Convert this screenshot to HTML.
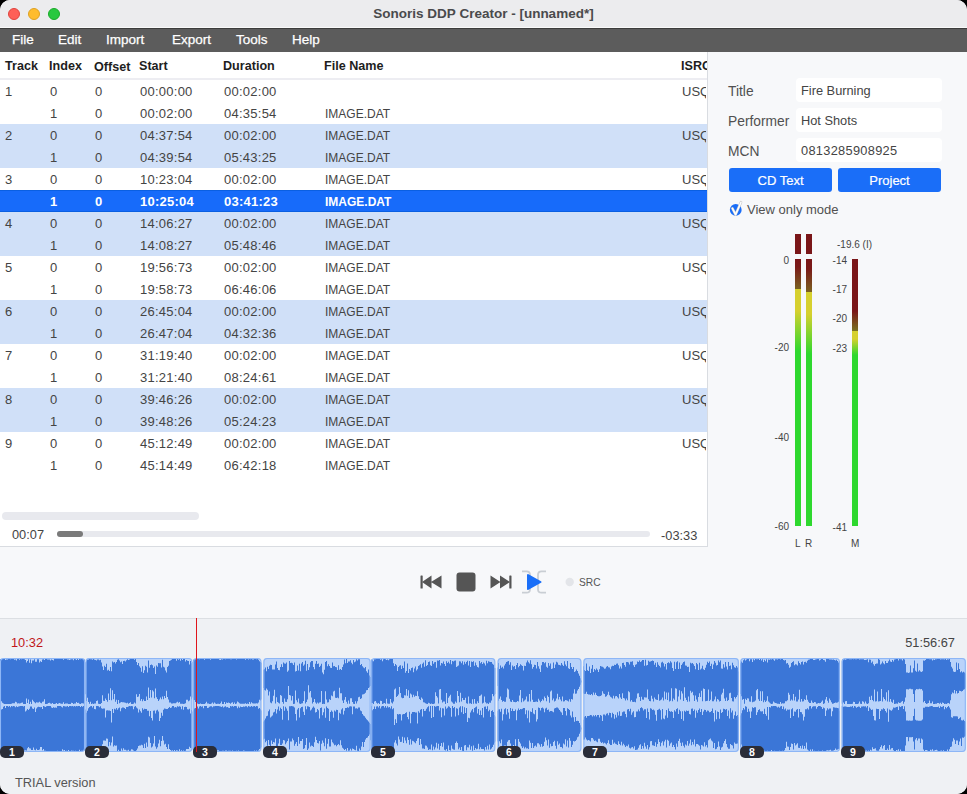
<!DOCTYPE html>
<html><head><meta charset="utf-8">
<style>
*{box-sizing:border-box;margin:0;padding:0}
html,body{width:967px;height:794px;overflow:hidden;background:#000}
body{font-family:"Liberation Sans",sans-serif;position:relative}
.win{position:absolute;left:0;top:0;width:967px;height:794px;border-radius:10px;overflow:hidden;background:#f7f8fa}
.abs{position:absolute}
.titlebar{left:0;top:0;width:967px;height:28px;background:#ececee;border-bottom:1px solid #fafafa}
.tl{position:absolute;width:12px;height:12px;border-radius:50%;top:8px}
.title{position:absolute;left:0;width:967px;top:6px;text-align:center;font-weight:bold;font-size:13.5px;color:#4a4a4c}
.menubar{left:0;top:28px;width:967px;height:24px;background:#5c5c5c;border-top:1px solid #3c3c3c}
.menubar span{position:absolute;top:3px;color:#fff;font-size:13.5px;-webkit-text-stroke:0.25px #fff}
.table{left:0;top:52px;width:708px;height:495px;background:#fff;border-right:1px solid #d9dce1;border-bottom:1px solid #d9dce1;overflow:hidden}
.hdr{position:absolute;top:0;left:0;width:707px;height:28px;border-bottom:2px solid #ededf2}
.hdr span{position:absolute;top:7.3px;font-weight:bold;font-size:12.6px;color:#1e1e1e}
.row{position:absolute;left:0;width:707px;height:22px;font-size:13px;color:#444}
.row span{position:absolute;top:4px;white-space:nowrap}
.row.b{background:#d0e0f8}
.row.sel{background:#176bfa;color:#fff;font-weight:bold;border-top:1px solid #0a5fe2;border-bottom:1px solid #0a5fe2}
.row.sel span{top:3px}
.row.sel .c5{top:4px!important}
.c0{left:5px}.c1{left:50px}.c2{left:95px}.c3{left:140px;letter-spacing:0.25px}.c4{left:224px;letter-spacing:0.25px}.c5{left:325px;font-size:12px;top:5px!important}.c6{left:682px;width:24px;overflow:hidden}

.lbl{position:absolute;font-size:13.8px;color:#505050}
.fld{position:absolute;left:796px;width:146px;height:24px;background:#fff;border-radius:4px;font-size:12.8px;color:#444;padding:4.5px 0 0 5px;white-space:nowrap}
.btn{position:absolute;top:168px;height:24px;background:#1a6ef8;border-radius:3px;color:#fff;font-size:13px;text-align:center;padding-top:5px;-webkit-text-stroke:0.2px #fff}
.ml{position:absolute;font-size:10px;color:#444;white-space:nowrap}
.bar{position:absolute;width:6px}
.tab{position:absolute;top:746px;width:24px;height:12px;border-radius:5px;background:#2a2d38;color:#fff;font-size:10.5px;font-weight:bold;text-align:center;line-height:12px}
</style></head><body>
<div class="win">
 <div class="abs titlebar">
  <div class="tl" style="left:8px;background:#fe5f57;border:0.5px solid #e0443e"></div>
  <div class="tl" style="left:28px;background:#febc2e;border:0.5px solid #dea123"></div>
  <div class="tl" style="left:48px;background:#28c840;border:0.5px solid #1aab29"></div>
  <div class="title">Sonoris DDP Creator - [unnamed*]</div>
 </div>
 <div class="abs menubar">
  <span style="left:12px">File</span><span style="left:58px">Edit</span><span style="left:106px">Import</span><span style="left:172px">Export</span><span style="left:236px">Tools</span><span style="left:292px">Help</span>
 </div>
 <div class="abs table">
  <div class="hdr"><span style="left:5px">Track</span><span style="left:49px">Index</span><span style="left:94px;top:8.3px">Offset</span><span style="left:139px">Start</span><span style="left:223px">Duration</span><span style="left:324px">File Name</span><span style="left:681px">ISRC</span></div>
  <div class="row" style="top:28px"><span class="c0">1</span><span class="c1">0</span><span class="c2">0</span><span class="c3">00:00:00</span><span class="c4">00:02:00</span><span class="c6">USQ</span></div>
<div class="row" style="top:50px"><span class="c1">1</span><span class="c2">0</span><span class="c3">00:02:00</span><span class="c4">04:35:54</span><span class="c5">IMAGE.DAT</span></div>
<div class="row b" style="top:72px"><span class="c0">2</span><span class="c1">0</span><span class="c2">0</span><span class="c3">04:37:54</span><span class="c4">00:02:00</span><span class="c5">IMAGE.DAT</span><span class="c6">USQ</span></div>
<div class="row b" style="top:94px"><span class="c1">1</span><span class="c2">0</span><span class="c3">04:39:54</span><span class="c4">05:43:25</span><span class="c5">IMAGE.DAT</span></div>
<div class="row" style="top:116px"><span class="c0">3</span><span class="c1">0</span><span class="c2">0</span><span class="c3">10:23:04</span><span class="c4">00:02:00</span><span class="c5">IMAGE.DAT</span><span class="c6">USQ</span></div>
<div class="row sel" style="top:138px"><span class="c1">1</span><span class="c2">0</span><span class="c3">10:25:04</span><span class="c4">03:41:23</span><span class="c5">IMAGE.DAT</span></div>
<div class="row b" style="top:160px"><span class="c0">4</span><span class="c1">0</span><span class="c2">0</span><span class="c3">14:06:27</span><span class="c4">00:02:00</span><span class="c5">IMAGE.DAT</span><span class="c6">USQ</span></div>
<div class="row b" style="top:182px"><span class="c1">1</span><span class="c2">0</span><span class="c3">14:08:27</span><span class="c4">05:48:46</span><span class="c5">IMAGE.DAT</span></div>
<div class="row" style="top:204px"><span class="c0">5</span><span class="c1">0</span><span class="c2">0</span><span class="c3">19:56:73</span><span class="c4">00:02:00</span><span class="c5">IMAGE.DAT</span><span class="c6">USQ</span></div>
<div class="row" style="top:226px"><span class="c1">1</span><span class="c2">0</span><span class="c3">19:58:73</span><span class="c4">06:46:06</span><span class="c5">IMAGE.DAT</span></div>
<div class="row b" style="top:248px"><span class="c0">6</span><span class="c1">0</span><span class="c2">0</span><span class="c3">26:45:04</span><span class="c4">00:02:00</span><span class="c5">IMAGE.DAT</span><span class="c6">USQ</span></div>
<div class="row b" style="top:270px"><span class="c1">1</span><span class="c2">0</span><span class="c3">26:47:04</span><span class="c4">04:32:36</span><span class="c5">IMAGE.DAT</span></div>
<div class="row" style="top:292px"><span class="c0">7</span><span class="c1">0</span><span class="c2">0</span><span class="c3">31:19:40</span><span class="c4">00:02:00</span><span class="c5">IMAGE.DAT</span><span class="c6">USQ</span></div>
<div class="row" style="top:314px"><span class="c1">1</span><span class="c2">0</span><span class="c3">31:21:40</span><span class="c4">08:24:61</span><span class="c5">IMAGE.DAT</span></div>
<div class="row b" style="top:336px"><span class="c0">8</span><span class="c1">0</span><span class="c2">0</span><span class="c3">39:46:26</span><span class="c4">00:02:00</span><span class="c5">IMAGE.DAT</span><span class="c6">USQ</span></div>
<div class="row b" style="top:358px"><span class="c1">1</span><span class="c2">0</span><span class="c3">39:48:26</span><span class="c4">05:24:23</span><span class="c5">IMAGE.DAT</span></div>
<div class="row" style="top:380px"><span class="c0">9</span><span class="c1">0</span><span class="c2">0</span><span class="c3">45:12:49</span><span class="c4">00:02:00</span><span class="c5">IMAGE.DAT</span><span class="c6">USQ</span></div>
<div class="row" style="top:402px"><span class="c1">1</span><span class="c2">0</span><span class="c3">45:14:49</span><span class="c4">06:42:18</span><span class="c5">IMAGE.DAT</span></div>

  <div class="abs" style="left:2px;top:460px;width:197px;height:8px;border-radius:4px;background:#e8e9ee"></div>
  <div class="abs" style="left:12px;top:475px;font-size:12.8px;color:#444">00:07</div>
  <div class="abs" style="left:57px;top:479px;width:593px;height:6px;border-radius:3px;background:#e8e9ee"></div>
  <div class="abs" style="left:57px;top:479px;width:26px;height:6px;border-radius:3px;background:#7a7a7a"></div>
  <div class="abs" style="left:661px;top:476px;font-size:12.8px;color:#444">-03:33</div>
 </div>
 <div class="lbl" style="left:728px;top:84px">Title</div>
 <div class="lbl" style="left:728px;top:114px">Performer</div>
 <div class="lbl" style="left:728px;top:144px">MCN</div>
 <div class="fld" style="top:78px">Fire Burning</div>
 <div class="fld" style="top:108px">Hot Shots</div>
 <div class="fld" style="top:138px;letter-spacing:0.3px">0813285908925</div>
 <div class="btn" style="left:729px;width:103px">CD Text</div>
 <div class="btn" style="left:838px;width:103px">Project</div>
 <svg class="abs" style="left:728px;top:196px" width="18" height="22" viewBox="728 196 18 22"><circle cx="735.75" cy="209.9" r="5.9" fill="#1a6ef8"/><path d="M732.4 208.4 L735.6 214.6 L741 202.2" stroke="#c8c8c8" stroke-width="2.6" fill="none" stroke-linejoin="round" stroke-linecap="round"/><path d="M732.4 208.4 L735.6 214.6 L741 202.2" stroke="#fff" stroke-width="1.5" fill="none" stroke-linejoin="round" stroke-linecap="round"/></svg>
 <div class="lbl" style="left:747px;top:202px;font-size:13px">View only mode</div>

 <div class="bar" style="left:795px;top:234px;height:20px;background:#7a1618"></div>
 <div class="bar" style="left:806px;top:234px;height:20px;background:#7a1618"></div>
 <div class="bar" style="left:795px;top:259px;height:267px;background:linear-gradient(to bottom,#7a1618 0px,#7a1a18 8px,#7a6020 29.5px,#d6d02e 30px,#d6d02e 52px,#2ed82e 92px,#2ed82e 267px)"></div>
 <div class="bar" style="left:806px;top:259px;height:267px;background:linear-gradient(to bottom,#7a1618 0px,#7a1a18 10px,#7a6020 32.5px,#d6d02e 33px,#d6d02e 55px,#2ed82e 95px,#2ed82e 267px)"></div>
 <div class="bar" style="left:852px;top:259px;height:267px;background:linear-gradient(to bottom,#7a1618 0px,#7a1618 52px,#7a7020 71.5px,#d6d02e 72px,#d6d02e 80px,#2ed82e 96px,#2ed82e 267px)"></div>
 <div class="ml" style="right:178px;top:255px">0</div>
 <div class="ml" style="right:178px;top:342px">-20</div>
 <div class="ml" style="right:178px;top:432px">-40</div>
 <div class="ml" style="right:178px;top:521px">-60</div>
 <div class="ml" style="right:120px;top:255px">-14</div>
 <div class="ml" style="right:120px;top:284px">-17</div>
 <div class="ml" style="right:120px;top:313px">-20</div>
 <div class="ml" style="right:120px;top:343px">-23</div>
 <div class="ml" style="right:120px;top:522px">-41</div>
 <div class="ml" style="left:837px;top:239px">-19.6 (I)</div>
 <div class="ml" style="left:795px;top:538px">L</div>
 <div class="ml" style="left:805px;top:538px">R</div>
 <div class="ml" style="left:851px;top:538px">M</div>

 <svg class="abs" style="left:415px;top:566px" width="190" height="32" viewBox="415 566 190 32">
  <rect x="420.5" y="575.5" width="2.2" height="13" rx="0.6" fill="#555"/>
  <path d="M422 582 L431.5 575.5 L431.5 588.5 Z M431 582 L441.5 575.5 L441.5 588.5 Z" fill="#555"/>
  <rect x="456.5" y="572.5" width="19" height="19" rx="3" fill="#555"/>
  <path d="M490.5 575.5 L500.5 582 L490.5 588.5 Z M500 575.5 L510 582 L500 588.5 Z" fill="#555"/>
  <rect x="509.3" y="575.5" width="2.2" height="13" rx="0.6" fill="#555"/>
  <path d="M522 571.3 H526.5 Q530 571.3 530 574.8 V589.2 Q530 592.7 526.5 592.7 H522 M546 571.3 H541.5 Q538 571.3 538 574.8 V589.2 Q538 592.7 541.5 592.7 H546" stroke="#c9ced4" stroke-width="1.8" fill="none"/>
  <path d="M528 575 L540.5 582 L528 589 Z" fill="#1a6ff8" stroke="#1a6ff8" stroke-width="2" stroke-linejoin="round"/>
  <circle cx="569.7" cy="582" r="4.2" fill="#e3e5e9"/>
 </svg>
 <div class="abs" style="left:579px;top:577px;font-size:10.2px;color:#555">SRC</div>
 <div class="abs" style="left:0;top:618px;width:967px;height:176px;background:#eff1f4;border-top:1px solid #dcdfe3"></div>
 <!--WAVE--><svg class="abs" style="left:0;top:0" width="967" height="794" viewBox="0 0 967 794">
<defs>
<clipPath id="cp0"><rect x="0" y="658" width="85" height="94" rx="3"/></clipPath>
<clipPath id="cp1"><rect x="85.6" y="658" width="106.7" height="94" rx="3"/></clipPath>
<clipPath id="cp2"><rect x="193.2" y="658" width="68.2" height="94" rx="3"/></clipPath>
<clipPath id="cp3"><rect x="263.4" y="658" width="107.2" height="94" rx="3"/></clipPath>
<clipPath id="cp4"><rect x="371.3" y="658" width="124" height="94" rx="3"/></clipPath>
<clipPath id="cp5"><rect x="497.6" y="658" width="83.8" height="94" rx="3"/></clipPath>
<clipPath id="cp6"><rect x="583.4" y="658" width="155.4" height="94" rx="3"/></clipPath>
<clipPath id="cp7"><rect x="740.3" y="658" width="99.5" height="94" rx="3"/></clipPath>
<clipPath id="cp8"><rect x="841.8" y="658" width="124" height="94" rx="3"/></clipPath>
</defs>
<rect x="0" y="658" width="85" height="94" rx="3" fill="#b9d3fa"/>
<path clip-path="url(#cp0)" fill="#3b76d7" d="M0 659.0 L1 659.0 L1 659.7 L2 659.7 L2 659.1 L3 659.1 L3 659.0 L4 659.0 L4 659.1 L5 659.1 L5 659.9 L6 659.9 L6 659.4 L7 659.4 L7 659.5 L8 659.5 L8 659.1 L9 659.1 L9 659.0 L10 659.0 L10 659.2 L11 659.2 L11 659.1 L12 659.1 L12 659.1 L13 659.1 L13 659.0 L14 659.0 L14 659.8 L15 659.8 L15 659.5 L16 659.5 L16 660.4 L17 660.4 L17 659.0 L18 659.0 L18 659.0 L19 659.0 L19 659.7 L20 659.7 L20 659.0 L21 659.0 L21 659.2 L22 659.2 L22 659.0 L23 659.0 L23 659.1 L24 659.1 L24 659.2 L25 659.2 L25 660.1 L26 660.1 L26 662.5 L27 662.5 L27 661.0 L28 661.0 L28 659.3 L29 659.3 L29 662.8 L30 662.8 L30 659.4 L31 659.4 L31 663.2 L32 663.2 L32 660.6 L33 660.6 L33 660.4 L34 660.4 L34 659.2 L35 659.2 L35 661.7 L36 661.7 L36 661.7 L37 661.7 L37 659.2 L38 659.2 L38 659.3 L39 659.3 L39 662.6 L40 662.6 L40 661.3 L41 661.3 L41 661.9 L42 661.9 L42 659.4 L43 659.4 L43 659.2 L44 659.2 L44 659.9 L45 659.9 L45 659.0 L46 659.0 L46 659.0 L47 659.0 L47 659.4 L48 659.4 L48 659.5 L49 659.5 L49 659.6 L50 659.6 L50 660.5 L51 660.5 L51 659.5 L52 659.5 L52 660.1 L53 660.1 L53 660.5 L54 660.5 L54 659.1 L55 659.1 L55 659.1 L56 659.1 L56 659.1 L57 659.1 L57 659.1 L58 659.1 L58 659.0 L59 659.0 L59 659.0 L60 659.0 L60 659.1 L61 659.1 L61 659.0 L62 659.0 L62 659.1 L63 659.1 L63 659.7 L64 659.7 L64 659.0 L65 659.0 L65 659.0 L66 659.0 L66 659.0 L67 659.0 L67 659.4 L68 659.4 L68 659.5 L69 659.5 L69 660.1 L70 660.1 L70 659.4 L71 659.4 L71 659.2 L72 659.2 L72 659.2 L73 659.2 L73 660.3 L74 660.3 L74 659.0 L75 659.0 L75 659.3 L76 659.3 L76 660.1 L77 660.1 L77 659.1 L78 659.1 L78 660.1 L79 660.1 L79 659.0 L80 659.0 L80 659.2 L81 659.2 L81 659.0 L82 659.0 L82 659.0 L83 659.0 L83 659.1 L84 659.1 L84 659.4 L85 659.4 L85 660.4 L86 660.4 L86 704.0 L85 704.0 L85 702.4 L84 702.4 L84 703.5 L83 703.5 L83 703.3 L82 703.3 L82 703.2 L81 703.2 L81 703.9 L80 703.9 L80 703.8 L79 703.8 L79 702.8 L78 702.8 L78 703.1 L77 703.1 L77 702.0 L76 702.0 L76 703.4 L75 703.4 L75 703.5 L74 703.5 L74 703.9 L73 703.9 L73 702.9 L72 702.9 L72 702.7 L71 702.7 L71 704.0 L70 704.0 L70 704.0 L69 704.0 L69 703.9 L68 703.9 L68 703.6 L67 703.6 L67 703.4 L66 703.4 L66 703.6 L65 703.6 L65 703.9 L64 703.9 L64 702.3 L63 702.3 L63 703.7 L62 703.7 L62 703.8 L61 703.8 L61 703.6 L60 703.6 L60 703.1 L59 703.1 L59 703.5 L58 703.5 L58 704.0 L57 704.0 L57 703.1 L56 703.1 L56 703.7 L55 703.7 L55 704.0 L54 704.0 L54 704.0 L53 704.0 L53 702.9 L52 702.9 L52 703.7 L51 703.7 L51 703.6 L50 703.6 L50 702.7 L49 702.7 L49 703.1 L48 703.1 L48 703.7 L47 703.7 L47 703.9 L46 703.9 L46 703.9 L45 703.9 L45 699.3 L44 699.3 L44 701.5 L43 701.5 L43 701.7 L42 701.7 L42 703.3 L41 703.3 L41 702.8 L40 702.8 L40 701.8 L39 701.8 L39 702.4 L38 702.4 L38 702.4 L37 702.4 L37 702.2 L36 702.2 L36 703.3 L35 703.3 L35 702.2 L34 702.2 L34 701.2 L33 701.2 L33 699.8 L32 699.8 L32 704.0 L31 704.0 L31 701.8 L30 701.8 L30 704.0 L29 704.0 L29 699.6 L28 699.6 L28 703.0 L27 703.0 L27 698.4 L26 698.4 L26 704.0 L25 704.0 L25 704.0 L24 704.0 L24 704.0 L23 704.0 L23 702.5 L22 702.5 L22 702.8 L21 702.8 L21 703.3 L20 703.3 L20 703.5 L19 703.5 L19 703.3 L18 703.3 L18 703.6 L17 703.6 L17 702.3 L16 702.3 L16 701.8 L15 701.8 L15 703.3 L14 703.3 L14 703.3 L13 703.3 L13 703.2 L12 703.2 L12 703.7 L11 703.7 L11 704.0 L10 704.0 L10 704.0 L9 704.0 L9 704.0 L8 704.0 L8 704.0 L7 704.0 L7 703.9 L6 703.9 L6 704.0 L5 704.0 L5 703.9 L4 703.9 L4 703.6 L3 703.6 L3 702.7 L2 702.7 L2 701.3 L1 701.3 L1 699.9 L0 699.9ZM0 711.2 L1 711.2 L1 709.4 L2 709.4 L2 708.9 L3 708.9 L3 706.8 L4 706.8 L4 706.0 L5 706.0 L5 708.0 L6 708.0 L6 706.0 L7 706.0 L7 706.0 L8 706.0 L8 706.7 L9 706.7 L9 706.0 L10 706.0 L10 707.3 L11 707.3 L11 706.1 L12 706.1 L12 706.4 L13 706.4 L13 706.0 L14 706.0 L14 706.3 L15 706.3 L15 707.2 L16 707.2 L16 706.3 L17 706.3 L17 707.0 L18 707.0 L18 706.5 L19 706.5 L19 706.2 L20 706.2 L20 706.1 L21 706.1 L21 706.1 L22 706.1 L22 706.1 L23 706.1 L23 706.4 L24 706.4 L24 706.1 L25 706.1 L25 711.6 L26 711.6 L26 710.4 L27 710.4 L27 709.0 L28 709.0 L28 709.9 L29 709.9 L29 708.7 L30 708.7 L30 706.4 L31 706.4 L31 706.6 L32 706.6 L32 708.4 L33 708.4 L33 709.1 L34 709.1 L34 707.6 L35 707.6 L35 712.0 L36 712.0 L36 708.4 L37 708.4 L37 707.3 L38 707.3 L38 706.7 L39 706.7 L39 706.9 L40 706.9 L40 707.2 L41 707.2 L41 707.0 L42 707.0 L42 709.0 L43 709.0 L43 706.0 L44 706.0 L44 706.5 L45 706.5 L45 706.9 L46 706.9 L46 706.2 L47 706.2 L47 706.0 L48 706.0 L48 706.0 L49 706.0 L49 706.0 L50 706.0 L50 706.1 L51 706.1 L51 707.4 L52 707.4 L52 708.0 L53 708.0 L53 707.3 L54 707.3 L54 707.8 L55 707.8 L55 707.5 L56 707.5 L56 707.8 L57 707.8 L57 706.0 L58 706.0 L58 706.0 L59 706.0 L59 706.1 L60 706.1 L60 706.1 L61 706.1 L61 706.7 L62 706.7 L62 707.6 L63 707.6 L63 706.0 L64 706.0 L64 706.3 L65 706.3 L65 706.4 L66 706.4 L66 706.4 L67 706.4 L67 706.1 L68 706.1 L68 707.1 L69 707.1 L69 706.0 L70 706.0 L70 706.1 L71 706.1 L71 706.2 L72 706.2 L72 706.1 L73 706.1 L73 706.6 L74 706.6 L74 706.0 L75 706.0 L75 706.6 L76 706.6 L76 706.0 L77 706.0 L77 706.3 L78 706.3 L78 706.1 L79 706.1 L79 706.1 L80 706.1 L80 707.1 L81 707.1 L81 706.1 L82 706.1 L82 706.7 L83 706.7 L83 706.0 L84 706.0 L84 706.4 L85 706.4 L85 706.0 L86 706.0 L86 751.0 L85 751.0 L85 750.6 L84 750.6 L84 750.7 L83 750.7 L83 751.0 L82 751.0 L82 750.7 L81 750.7 L81 750.9 L80 750.9 L80 749.8 L79 749.8 L79 751.0 L78 751.0 L78 750.9 L77 750.9 L77 750.9 L76 750.9 L76 750.7 L75 750.7 L75 750.9 L74 750.9 L74 750.8 L73 750.8 L73 750.8 L72 750.8 L72 750.6 L71 750.6 L71 751.0 L70 751.0 L70 751.0 L69 751.0 L69 749.9 L68 749.9 L68 751.0 L67 751.0 L67 750.8 L66 750.8 L66 750.9 L65 750.9 L65 750.1 L64 750.1 L64 750.5 L63 750.5 L63 749.2 L62 749.2 L62 751.0 L61 751.0 L61 750.9 L60 750.9 L60 751.0 L59 751.0 L59 750.9 L58 750.9 L58 750.7 L57 750.7 L57 750.9 L56 750.9 L56 750.9 L55 750.9 L55 750.9 L54 750.9 L54 751.0 L53 751.0 L53 751.0 L52 751.0 L52 750.9 L51 750.9 L51 751.0 L50 751.0 L50 751.0 L49 751.0 L49 750.9 L48 750.9 L48 751.0 L47 751.0 L47 750.9 L46 750.9 L46 750.8 L45 750.8 L45 750.8 L44 750.8 L44 749.0 L43 749.0 L43 750.3 L42 750.3 L42 746.9 L41 746.9 L41 747.0 L40 747.0 L40 749.5 L39 749.5 L39 750.0 L38 750.0 L38 750.1 L37 750.1 L37 748.8 L36 748.8 L36 750.3 L35 750.3 L35 749.8 L34 749.8 L34 747.5 L33 747.5 L33 749.9 L32 749.9 L32 750.1 L31 750.1 L31 748.5 L30 748.5 L30 748.2 L29 748.2 L29 747.1 L28 747.1 L28 748.2 L27 748.2 L27 750.4 L26 750.4 L26 750.3 L25 750.3 L25 750.5 L24 750.5 L24 750.3 L23 750.3 L23 751.0 L22 751.0 L22 750.5 L21 750.5 L21 750.2 L20 750.2 L20 750.8 L19 750.8 L19 750.9 L18 750.9 L18 750.9 L17 750.9 L17 750.5 L16 750.5 L16 750.7 L15 750.7 L15 750.8 L14 750.8 L14 751.0 L13 751.0 L13 750.9 L12 750.9 L12 751.0 L11 751.0 L11 750.6 L10 750.6 L10 750.6 L9 750.6 L9 750.9 L8 750.9 L8 750.9 L7 750.9 L7 750.9 L6 750.9 L6 750.9 L5 750.9 L5 751.0 L4 751.0 L4 750.5 L3 750.5 L3 750.8 L2 750.8 L2 750.7 L1 750.7 L1 751.0 L0 751.0Z"/>
<rect x="0.5" y="658.5" width="84" height="93" rx="3.5" fill="none" stroke="#8db6f6" stroke-width="1.1"/>
<rect x="85.6" y="658" width="106.7" height="94" rx="3" fill="#b9d3fa"/>
<path clip-path="url(#cp1)" fill="#3b76d7" d="M85 662.3 L86 662.3 L86 659.9 L87 659.9 L87 659.5 L88 659.5 L88 659.4 L89 659.4 L89 659.1 L90 659.1 L90 659.3 L91 659.3 L91 659.2 L92 659.2 L92 659.7 L93 659.7 L93 659.1 L94 659.1 L94 659.7 L95 659.7 L95 660.0 L96 660.0 L96 660.6 L97 660.6 L97 659.6 L98 659.6 L98 659.5 L99 659.5 L99 660.3 L100 660.3 L100 659.7 L101 659.7 L101 662.6 L102 662.6 L102 666.5 L103 666.5 L103 670.0 L104 670.0 L104 665.8 L105 665.8 L105 667.1 L106 667.1 L106 663.7 L107 663.7 L107 670.5 L108 670.5 L108 669.8 L109 669.8 L109 670.9 L110 670.9 L110 667.0 L111 667.0 L111 671.3 L112 671.3 L112 661.5 L113 661.5 L113 662.6 L114 662.6 L114 662.1 L115 662.1 L115 663.6 L116 663.6 L116 662.1 L117 662.1 L117 659.7 L118 659.7 L118 659.2 L119 659.2 L119 660.4 L120 660.4 L120 662.3 L121 662.3 L121 661.6 L122 661.6 L122 664.1 L123 664.1 L123 660.9 L124 660.9 L124 660.8 L125 660.8 L125 661.4 L126 661.4 L126 660.2 L127 660.2 L127 659.2 L128 659.2 L128 659.9 L129 659.9 L129 659.4 L130 659.4 L130 659.1 L131 659.1 L131 659.0 L132 659.0 L132 659.0 L133 659.0 L133 659.1 L134 659.1 L134 659.7 L135 659.7 L135 659.0 L136 659.0 L136 661.9 L137 661.9 L137 665.1 L138 665.1 L138 662.9 L139 662.9 L139 666.3 L140 666.3 L140 667.7 L141 667.7 L141 671.8 L142 671.8 L142 666.2 L143 666.2 L143 672.9 L144 672.9 L144 670.3 L145 670.3 L145 665.8 L146 665.8 L146 666.8 L147 666.8 L147 672.5 L148 672.5 L148 660.4 L149 660.4 L149 667.7 L150 667.7 L150 665.0 L151 665.0 L151 664.6 L152 664.6 L152 665.2 L153 665.2 L153 668.1 L154 668.1 L154 666.4 L155 666.4 L155 674.1 L156 674.1 L156 665.5 L157 665.5 L157 666.7 L158 666.7 L158 663.0 L159 663.0 L159 663.3 L160 663.3 L160 663.3 L161 663.3 L161 667.4 L162 667.4 L162 659.7 L163 659.7 L163 666.7 L164 666.7 L164 667.6 L165 667.6 L165 670.5 L166 670.5 L166 672.5 L167 672.5 L167 667.1 L168 667.1 L168 665.8 L169 665.8 L169 660.9 L170 660.9 L170 660.5 L171 660.5 L171 659.7 L172 659.7 L172 659.0 L173 659.0 L173 659.1 L174 659.1 L174 659.1 L175 659.1 L175 659.0 L176 659.0 L176 660.8 L177 660.8 L177 659.1 L178 659.1 L178 659.7 L179 659.7 L179 659.0 L180 659.0 L180 660.7 L181 660.7 L181 659.0 L182 659.0 L182 659.9 L183 659.9 L183 659.1 L184 659.1 L184 659.1 L185 659.1 L185 661.4 L186 661.4 L186 660.0 L187 660.0 L187 660.7 L188 660.7 L188 661.1 L189 661.1 L189 664.5 L190 664.5 L190 660.9 L191 660.9 L191 663.2 L192 663.2 L192 662.1 L193 662.1 L193 664.8 L194 664.8 L194 699.0 L193 699.0 L193 697.4 L192 697.4 L192 699.3 L191 699.3 L191 696.4 L190 696.4 L190 700.5 L189 700.5 L189 701.3 L188 701.3 L188 699.8 L187 699.8 L187 699.8 L186 699.8 L186 703.3 L185 703.3 L185 703.7 L184 703.7 L184 703.9 L183 703.9 L183 703.8 L182 703.8 L182 703.8 L181 703.8 L181 703.7 L180 703.7 L180 702.0 L179 702.0 L179 702.7 L178 702.7 L178 701.7 L177 701.7 L177 702.6 L176 702.6 L176 703.3 L175 703.3 L175 703.3 L174 703.3 L174 703.3 L173 703.3 L173 703.5 L172 703.5 L172 703.4 L171 703.4 L171 702.5 L170 702.5 L170 702.6 L169 702.6 L169 699.4 L168 699.4 L168 696.9 L167 696.9 L167 690.7 L166 690.7 L166 698.1 L165 698.1 L165 696.0 L164 696.0 L164 699.3 L163 699.3 L163 696.4 L162 696.4 L162 699.2 L161 699.2 L161 697.6 L160 697.6 L160 699.5 L159 699.5 L159 701.1 L158 701.1 L158 698.9 L157 698.9 L157 697.3 L156 697.3 L156 688.5 L155 688.5 L155 698.3 L154 698.3 L154 691.4 L153 691.4 L153 690.2 L152 690.2 L152 697.6 L151 697.6 L151 690.1 L150 690.1 L150 698.0 L149 698.0 L149 687.6 L148 687.6 L148 699.9 L147 699.9 L147 696.6 L146 696.6 L146 701.0 L145 701.0 L145 701.1 L144 701.1 L144 699.6 L143 699.6 L143 701.2 L142 701.2 L142 699.1 L141 699.1 L141 700.7 L140 700.7 L140 694.1 L139 694.1 L139 696.5 L138 696.5 L138 696.9 L137 696.9 L137 694.2 L136 694.2 L136 703.4 L135 703.4 L135 702.4 L134 702.4 L134 703.8 L133 703.8 L133 703.9 L132 703.9 L132 704.0 L131 704.0 L131 702.3 L130 702.3 L130 703.1 L129 703.1 L129 703.8 L128 703.8 L128 702.7 L127 702.7 L127 703.2 L126 703.2 L126 702.8 L125 702.8 L125 702.5 L124 702.5 L124 702.3 L123 702.3 L123 702.2 L122 702.2 L122 702.1 L121 702.1 L121 702.6 L120 702.6 L120 703.3 L119 703.3 L119 700.1 L118 700.1 L118 703.9 L117 703.9 L117 699.7 L116 699.7 L116 701.7 L115 701.7 L115 694.0 L114 694.0 L114 699.2 L113 699.2 L113 690.3 L112 690.3 L112 700.2 L111 700.2 L111 688.3 L110 688.3 L110 700.0 L109 700.0 L109 693.6 L108 693.6 L108 701.7 L107 701.7 L107 699.9 L106 699.9 L106 698.5 L105 698.5 L105 701.0 L104 701.0 L104 700.7 L103 700.7 L103 695.2 L102 695.2 L102 702.9 L101 702.9 L101 704.0 L100 704.0 L100 703.9 L99 703.9 L99 703.7 L98 703.7 L98 700.4 L97 700.4 L97 701.0 L96 701.0 L96 703.4 L95 703.4 L95 703.6 L94 703.6 L94 703.9 L93 703.9 L93 703.6 L92 703.6 L92 704.0 L91 704.0 L91 701.7 L90 701.7 L90 703.7 L89 703.7 L89 702.1 L88 702.1 L88 697.8 L87 697.8 L87 700.9 L86 700.9 L86 694.2 L85 694.2ZM85 709.5 L86 709.5 L86 712.8 L87 712.8 L87 710.7 L88 710.7 L88 708.2 L89 708.2 L89 707.1 L90 707.1 L90 706.2 L91 706.2 L91 706.1 L92 706.1 L92 707.6 L93 707.6 L93 706.1 L94 706.1 L94 709.0 L95 709.0 L95 709.2 L96 709.2 L96 706.0 L97 706.0 L97 706.1 L98 706.1 L98 706.2 L99 706.2 L99 707.3 L100 707.3 L100 706.2 L101 706.2 L101 708.2 L102 708.2 L102 708.8 L103 708.8 L103 708.4 L104 708.4 L104 708.6 L105 708.6 L105 717.6 L106 717.6 L106 710.6 L107 710.6 L107 710.3 L108 710.3 L108 710.5 L109 710.5 L109 710.4 L110 710.4 L110 711.0 L111 711.0 L111 722.5 L112 722.5 L112 708.9 L113 708.9 L113 713.0 L114 713.0 L114 708.8 L115 708.8 L115 709.4 L116 709.4 L116 707.9 L117 707.9 L117 709.7 L118 709.7 L118 708.2 L119 708.2 L119 707.5 L120 707.5 L120 711.2 L121 711.2 L121 708.3 L122 708.3 L122 707.6 L123 707.6 L123 707.4 L124 707.4 L124 708.1 L125 708.1 L125 709.0 L126 709.0 L126 707.1 L127 707.1 L127 707.0 L128 707.0 L128 706.4 L129 706.4 L129 706.0 L130 706.0 L130 706.3 L131 706.3 L131 706.0 L132 706.0 L132 706.2 L133 706.2 L133 709.2 L134 709.2 L134 706.7 L135 706.7 L135 706.0 L136 706.0 L136 707.6 L137 707.6 L137 708.6 L138 708.6 L138 712.4 L139 712.4 L139 709.6 L140 709.6 L140 711.2 L141 711.2 L141 712.8 L142 712.8 L142 708.3 L143 708.3 L143 709.8 L144 709.8 L144 708.8 L145 708.8 L145 709.0 L146 709.0 L146 709.0 L147 709.0 L147 710.8 L148 710.8 L148 710.8 L149 710.8 L149 716.2 L150 716.2 L150 711.1 L151 711.1 L151 717.9 L152 717.9 L152 720.5 L153 720.5 L153 710.7 L154 710.7 L154 710.4 L155 710.4 L155 713.4 L156 713.4 L156 710.4 L157 710.4 L157 709.7 L158 709.7 L158 711.4 L159 711.4 L159 720.9 L160 720.9 L160 718.0 L161 718.0 L161 712.8 L162 712.8 L162 715.7 L163 715.7 L163 709.7 L164 709.7 L164 708.6 L165 708.6 L165 708.8 L166 708.8 L166 709.1 L167 709.1 L167 709.0 L168 709.0 L168 707.9 L169 707.9 L169 707.1 L170 707.1 L170 708.0 L171 708.0 L171 707.4 L172 707.4 L172 706.0 L173 706.0 L173 706.0 L174 706.0 L174 707.6 L175 707.6 L175 707.0 L176 707.0 L176 707.6 L177 707.6 L177 706.3 L178 706.3 L178 706.7 L179 706.7 L179 706.2 L180 706.2 L180 706.7 L181 706.7 L181 709.3 L182 709.3 L182 706.2 L183 706.2 L183 709.7 L184 709.7 L184 706.9 L185 706.9 L185 706.7 L186 706.7 L186 707.1 L187 707.1 L187 709.2 L188 709.2 L188 709.5 L189 709.5 L189 708.8 L190 708.8 L190 713.4 L191 713.4 L191 710.0 L192 710.0 L192 711.4 L193 711.4 L193 710.5 L194 710.5 L194 748.6 L193 748.6 L193 749.7 L192 749.7 L192 747.8 L191 747.8 L191 748.0 L190 748.0 L190 746.7 L189 746.7 L189 748.9 L188 748.9 L188 749.0 L187 749.0 L187 748.9 L186 748.9 L186 750.7 L185 750.7 L185 751.0 L184 751.0 L184 750.6 L183 750.6 L183 751.0 L182 751.0 L182 750.2 L181 750.2 L181 750.9 L180 750.9 L180 749.2 L179 749.2 L179 751.0 L178 751.0 L178 750.6 L177 750.6 L177 750.3 L176 750.3 L176 750.9 L175 750.9 L175 750.0 L174 750.0 L174 750.9 L173 750.9 L173 750.3 L172 750.3 L172 750.8 L171 750.8 L171 750.1 L170 750.1 L170 749.1 L169 749.1 L169 744.3 L168 744.3 L168 748.9 L167 748.9 L167 746.9 L166 746.9 L166 743.8 L165 743.8 L165 744.4 L164 744.4 L164 740.4 L163 740.4 L163 736.1 L162 736.1 L162 740.9 L161 740.9 L161 746.2 L160 746.2 L160 739.7 L159 739.7 L159 743.6 L158 743.6 L158 747.2 L157 747.2 L157 748.8 L156 748.8 L156 746.4 L155 746.4 L155 736.1 L154 736.1 L154 743.5 L153 743.5 L153 746.5 L152 746.5 L152 747.5 L151 747.5 L151 743.0 L150 743.0 L150 737.5 L149 737.5 L149 736.8 L148 736.8 L148 746.8 L147 746.8 L147 742.4 L146 742.4 L146 748.0 L145 748.0 L145 743.7 L144 743.7 L144 748.1 L143 748.1 L143 745.3 L142 745.3 L142 744.7 L141 744.7 L141 745.6 L140 745.6 L140 745.4 L139 745.4 L139 745.9 L138 745.9 L138 748.4 L137 748.4 L137 750.2 L136 750.2 L136 751.0 L135 751.0 L135 751.0 L134 751.0 L134 750.5 L133 750.5 L133 749.5 L132 749.5 L132 749.2 L131 749.2 L131 750.7 L130 750.7 L130 751.0 L129 751.0 L129 749.8 L128 749.8 L128 750.4 L127 750.4 L127 750.6 L126 750.6 L126 749.7 L125 749.7 L125 749.8 L124 749.8 L124 748.2 L123 748.2 L123 750.5 L122 750.5 L122 748.6 L121 748.6 L121 750.9 L120 750.9 L120 751.0 L119 751.0 L119 749.8 L118 749.8 L118 750.9 L117 750.9 L117 745.4 L116 745.4 L116 745.8 L115 745.8 L115 745.3 L114 745.3 L114 746.4 L113 746.4 L113 736.5 L112 736.5 L112 742.5 L111 742.5 L111 745.6 L110 745.6 L110 742.0 L109 742.0 L109 746.2 L108 746.2 L108 738.8 L107 738.8 L107 738.5 L106 738.5 L106 740.8 L105 740.8 L105 740.6 L104 740.6 L104 740.6 L103 740.6 L103 744.3 L102 744.3 L102 749.0 L101 749.0 L101 750.9 L100 750.9 L100 748.9 L99 748.9 L99 751.0 L98 751.0 L98 749.7 L97 749.7 L97 750.4 L96 750.4 L96 750.5 L95 750.5 L95 751.0 L94 751.0 L94 751.0 L93 751.0 L93 750.6 L92 750.6 L92 751.0 L91 751.0 L91 750.8 L90 750.8 L90 750.5 L89 750.5 L89 750.5 L88 750.5 L88 749.7 L87 749.7 L87 750.0 L86 750.0 L86 749.3 L85 749.3Z"/>
<rect x="86.1" y="658.5" width="105.7" height="93" rx="3.5" fill="none" stroke="#8db6f6" stroke-width="1.1"/>
<rect x="193.2" y="658" width="68.2" height="94" rx="3" fill="#b9d3fa"/>
<path clip-path="url(#cp2)" fill="#3b76d7" d="M193 659.4 L194 659.4 L194 659.0 L195 659.0 L195 659.0 L196 659.0 L196 659.4 L197 659.4 L197 659.0 L198 659.0 L198 659.0 L199 659.0 L199 659.2 L200 659.2 L200 659.1 L201 659.1 L201 659.0 L202 659.0 L202 659.0 L203 659.0 L203 659.0 L204 659.0 L204 659.7 L205 659.7 L205 659.1 L206 659.1 L206 659.1 L207 659.1 L207 659.0 L208 659.0 L208 659.0 L209 659.0 L209 659.0 L210 659.0 L210 659.8 L211 659.8 L211 659.0 L212 659.0 L212 659.1 L213 659.1 L213 659.1 L214 659.1 L214 659.0 L215 659.0 L215 659.0 L216 659.0 L216 659.0 L217 659.0 L217 659.0 L218 659.0 L218 659.1 L219 659.1 L219 659.8 L220 659.8 L220 660.1 L221 660.1 L221 659.3 L222 659.3 L222 659.4 L223 659.4 L223 659.0 L224 659.0 L224 659.1 L225 659.1 L225 659.3 L226 659.3 L226 659.1 L227 659.1 L227 659.1 L228 659.1 L228 659.1 L229 659.1 L229 659.0 L230 659.0 L230 659.3 L231 659.3 L231 659.3 L232 659.3 L232 659.1 L233 659.1 L233 659.0 L234 659.0 L234 659.1 L235 659.1 L235 659.1 L236 659.1 L236 659.5 L237 659.5 L237 659.0 L238 659.0 L238 659.1 L239 659.1 L239 659.0 L240 659.0 L240 659.0 L241 659.0 L241 659.1 L242 659.1 L242 659.1 L243 659.1 L243 659.0 L244 659.0 L244 659.1 L245 659.1 L245 659.8 L246 659.8 L246 659.0 L247 659.0 L247 659.0 L248 659.0 L248 659.4 L249 659.4 L249 659.1 L250 659.1 L250 659.2 L251 659.2 L251 659.0 L252 659.0 L252 659.4 L253 659.4 L253 659.6 L254 659.6 L254 659.1 L255 659.1 L255 659.1 L256 659.1 L256 659.2 L257 659.2 L257 659.1 L258 659.1 L258 659.7 L259 659.7 L259 661.2 L260 661.2 L260 661.9 L261 661.9 L261 662.8 L262 662.8 L262 663.2 L263 663.2 L263 699.0 L262 699.0 L262 699.4 L261 699.4 L261 700.4 L260 700.4 L260 699.8 L259 699.8 L259 702.6 L258 702.6 L258 703.6 L257 703.6 L257 703.2 L256 703.2 L256 703.6 L255 703.6 L255 703.6 L254 703.6 L254 703.6 L253 703.6 L253 703.2 L252 703.2 L252 702.2 L251 702.2 L251 703.7 L250 703.7 L250 701.9 L249 701.9 L249 703.9 L248 703.9 L248 703.6 L247 703.6 L247 703.9 L246 703.9 L246 703.3 L245 703.3 L245 703.7 L244 703.7 L244 703.8 L243 703.8 L243 703.7 L242 703.7 L242 703.7 L241 703.7 L241 703.7 L240 703.7 L240 703.2 L239 703.2 L239 702.2 L238 702.2 L238 701.4 L237 701.4 L237 703.6 L236 703.6 L236 703.9 L235 703.9 L235 702.6 L234 702.6 L234 704.0 L233 704.0 L233 702.3 L232 702.3 L232 702.7 L231 702.7 L231 703.7 L230 703.7 L230 702.9 L229 702.9 L229 702.4 L228 702.4 L228 703.0 L227 703.0 L227 702.6 L226 702.6 L226 703.9 L225 703.9 L225 702.1 L224 702.1 L224 704.0 L223 704.0 L223 704.0 L222 704.0 L222 701.6 L221 701.6 L221 703.3 L220 703.3 L220 704.0 L219 704.0 L219 703.7 L218 703.7 L218 703.8 L217 703.8 L217 704.0 L216 704.0 L216 703.4 L215 703.4 L215 702.6 L214 702.6 L214 703.7 L213 703.7 L213 702.4 L212 702.4 L212 703.6 L211 703.6 L211 704.0 L210 704.0 L210 704.0 L209 704.0 L209 703.5 L208 703.5 L208 703.4 L207 703.4 L207 701.8 L206 701.8 L206 703.2 L205 703.2 L205 704.0 L204 704.0 L204 704.0 L203 704.0 L203 704.0 L202 704.0 L202 704.0 L201 704.0 L201 703.5 L200 703.5 L200 704.0 L199 704.0 L199 704.0 L198 704.0 L198 703.6 L197 703.6 L197 702.9 L196 702.9 L196 702.0 L195 702.0 L195 700.1 L194 700.1 L194 699.9 L193 699.9ZM193 710.3 L194 710.3 L194 708.6 L195 708.6 L195 708.1 L196 708.1 L196 707.6 L197 707.6 L197 706.4 L198 706.4 L198 708.4 L199 708.4 L199 706.6 L200 706.6 L200 706.1 L201 706.1 L201 706.7 L202 706.7 L202 706.2 L203 706.2 L203 708.2 L204 708.2 L204 706.0 L205 706.0 L205 706.0 L206 706.0 L206 706.1 L207 706.1 L207 708.1 L208 708.1 L208 707.8 L209 707.8 L209 706.8 L210 706.8 L210 706.2 L211 706.2 L211 706.2 L212 706.2 L212 707.3 L213 707.3 L213 706.2 L214 706.2 L214 706.3 L215 706.3 L215 706.1 L216 706.1 L216 706.0 L217 706.0 L217 706.0 L218 706.0 L218 706.1 L219 706.1 L219 706.2 L220 706.2 L220 706.4 L221 706.4 L221 707.1 L222 707.1 L222 706.3 L223 706.3 L223 707.6 L224 707.6 L224 706.7 L225 706.7 L225 706.3 L226 706.3 L226 707.2 L227 707.2 L227 706.9 L228 706.9 L228 707.8 L229 707.8 L229 707.9 L230 707.9 L230 706.0 L231 706.0 L231 706.5 L232 706.5 L232 706.0 L233 706.0 L233 706.8 L234 706.8 L234 706.1 L235 706.1 L235 706.0 L236 706.0 L236 706.2 L237 706.2 L237 708.2 L238 708.2 L238 706.4 L239 706.4 L239 707.7 L240 707.7 L240 706.6 L241 706.6 L241 707.1 L242 707.1 L242 707.1 L243 707.1 L243 706.6 L244 706.6 L244 706.8 L245 706.8 L245 706.2 L246 706.2 L246 706.2 L247 706.2 L247 707.2 L248 707.2 L248 706.1 L249 706.1 L249 706.6 L250 706.6 L250 706.7 L251 706.7 L251 706.0 L252 706.0 L252 706.7 L253 706.7 L253 706.3 L254 706.3 L254 706.1 L255 706.1 L255 706.8 L256 706.8 L256 706.1 L257 706.1 L257 706.2 L258 706.2 L258 708.8 L259 708.8 L259 708.0 L260 708.0 L260 709.3 L261 709.3 L261 710.6 L262 710.6 L262 712.6 L263 712.6 L263 747.0 L262 747.0 L262 747.3 L261 747.3 L261 748.5 L260 748.5 L260 749.1 L259 749.1 L259 750.5 L258 750.5 L258 750.9 L257 750.9 L257 750.6 L256 750.6 L256 751.0 L255 751.0 L255 750.4 L254 750.4 L254 750.9 L253 750.9 L253 751.0 L252 751.0 L252 751.0 L251 751.0 L251 751.0 L250 751.0 L250 751.0 L249 751.0 L249 750.9 L248 750.9 L248 750.9 L247 750.9 L247 750.9 L246 750.9 L246 750.9 L245 750.9 L245 750.7 L244 750.7 L244 750.5 L243 750.5 L243 750.9 L242 750.9 L242 750.9 L241 750.9 L241 750.9 L240 750.9 L240 751.0 L239 751.0 L239 750.4 L238 750.4 L238 750.9 L237 750.9 L237 750.8 L236 750.8 L236 750.9 L235 750.9 L235 750.9 L234 750.9 L234 751.0 L233 751.0 L233 750.4 L232 750.4 L232 751.0 L231 751.0 L231 750.8 L230 750.8 L230 750.7 L229 750.7 L229 750.7 L228 750.7 L228 750.9 L227 750.9 L227 750.4 L226 750.4 L226 750.4 L225 750.4 L225 750.9 L224 750.9 L224 750.7 L223 750.7 L223 750.8 L222 750.8 L222 750.9 L221 750.9 L221 750.9 L220 750.9 L220 751.0 L219 751.0 L219 750.3 L218 750.3 L218 750.2 L217 750.2 L217 750.9 L216 750.9 L216 751.0 L215 751.0 L215 751.0 L214 751.0 L214 750.9 L213 750.9 L213 751.0 L212 751.0 L212 751.0 L211 751.0 L211 751.0 L210 751.0 L210 751.0 L209 751.0 L209 751.0 L208 751.0 L208 750.5 L207 750.5 L207 751.0 L206 751.0 L206 751.0 L205 751.0 L205 750.6 L204 750.6 L204 751.0 L203 751.0 L203 751.0 L202 751.0 L202 750.7 L201 750.7 L201 750.4 L200 750.4 L200 751.0 L199 751.0 L199 751.0 L198 751.0 L198 750.5 L197 750.5 L197 750.7 L196 750.7 L196 750.7 L195 750.7 L195 750.6 L194 750.6 L194 750.7 L193 750.7Z"/>
<rect x="193.7" y="658.5" width="67.2" height="93" rx="3.5" fill="none" stroke="#8db6f6" stroke-width="1.1"/>
<rect x="263.4" y="658" width="107.2" height="94" rx="3" fill="#b9d3fa"/>
<path clip-path="url(#cp3)" fill="#3b76d7" d="M263 669.8 L264 669.8 L264 669.2 L265 669.2 L265 667.5 L266 667.5 L266 671.2 L267 671.2 L267 666.7 L268 666.7 L268 669.0 L269 669.0 L269 665.7 L270 665.7 L270 664.8 L271 664.8 L271 665.0 L272 665.0 L272 669.5 L273 669.5 L273 669.4 L274 669.4 L274 669.6 L275 669.6 L275 664.4 L276 664.4 L276 661.5 L277 661.5 L277 668.1 L278 668.1 L278 669.9 L279 669.9 L279 670.2 L280 670.2 L280 667.1 L281 667.1 L281 664.3 L282 664.3 L282 666.9 L283 666.9 L283 662.5 L284 662.5 L284 663.4 L285 663.4 L285 663.7 L286 663.7 L286 662.5 L287 662.5 L287 671.8 L288 671.8 L288 670.5 L289 670.5 L289 661.1 L290 661.1 L290 662.9 L291 662.9 L291 662.7 L292 662.7 L292 663.3 L293 663.3 L293 665.0 L294 665.0 L294 662.4 L295 662.4 L295 671.6 L296 671.6 L296 671.0 L297 671.0 L297 665.4 L298 665.4 L298 670.4 L299 670.4 L299 663.8 L300 663.8 L300 671.2 L301 671.2 L301 663.6 L302 663.6 L302 662.0 L303 662.0 L303 665.7 L304 665.7 L304 664.4 L305 664.4 L305 660.8 L306 660.8 L306 670.8 L307 670.8 L307 663.9 L308 663.9 L308 669.9 L309 669.9 L309 667.2 L310 667.2 L310 662.3 L311 662.3 L311 660.9 L312 660.9 L312 661.1 L313 661.1 L313 666.9 L314 666.9 L314 669.2 L315 669.2 L315 663.7 L316 663.7 L316 661.0 L317 661.0 L317 663.9 L318 663.9 L318 663.6 L319 663.6 L319 667.0 L320 667.0 L320 665.8 L321 665.8 L321 663.8 L322 663.8 L322 672.4 L323 672.4 L323 674.3 L324 674.3 L324 669.8 L325 669.8 L325 662.1 L326 662.1 L326 661.0 L327 661.0 L327 666.3 L328 666.3 L328 664.3 L329 664.3 L329 665.9 L330 665.9 L330 667.7 L331 667.7 L331 668.0 L332 668.0 L332 662.4 L333 662.4 L333 666.2 L334 666.2 L334 666.0 L335 666.0 L335 666.9 L336 666.9 L336 667.3 L337 667.3 L337 670.0 L338 670.0 L338 665.3 L339 665.3 L339 669.7 L340 669.7 L340 669.0 L341 669.0 L341 670.1 L342 670.1 L342 667.0 L343 667.0 L343 664.4 L344 664.4 L344 659.6 L345 659.6 L345 663.3 L346 663.3 L346 659.1 L347 659.1 L347 663.0 L348 663.0 L348 661.6 L349 661.6 L349 661.5 L350 661.5 L350 660.3 L351 660.3 L351 662.8 L352 662.8 L352 664.3 L353 664.3 L353 660.1 L354 660.1 L354 662.2 L355 662.2 L355 661.6 L356 661.6 L356 659.3 L357 659.3 L357 660.6 L358 660.6 L358 659.2 L359 659.2 L359 659.2 L360 659.2 L360 664.9 L361 664.9 L361 663.9 L362 663.9 L362 666.3 L363 666.3 L363 667.5 L364 667.5 L364 668.3 L365 668.3 L365 667.0 L366 667.0 L366 671.3 L367 671.3 L367 672.7 L368 672.7 L368 669.5 L369 669.5 L369 675.6 L370 675.6 L370 676.9 L371 676.9 L371 677.0 L372 677.0 L372 686.0 L371 686.0 L371 685.9 L370 685.9 L370 687.2 L369 687.2 L369 688.0 L368 688.0 L368 690.0 L367 690.0 L367 690.2 L366 690.2 L366 692.7 L365 692.7 L365 693.7 L364 693.7 L364 694.3 L363 694.3 L363 694.6 L362 694.6 L362 698.2 L361 698.2 L361 698.9 L360 698.9 L360 696.7 L359 696.7 L359 697.2 L358 697.2 L358 701.2 L357 701.2 L357 703.5 L356 703.5 L356 701.2 L355 701.2 L355 703.9 L354 703.9 L354 703.7 L353 703.7 L353 701.9 L352 701.9 L352 698.3 L351 698.3 L351 698.3 L350 698.3 L350 703.8 L349 703.8 L349 700.5 L348 700.5 L348 703.8 L347 703.8 L347 701.7 L346 701.7 L346 697.1 L345 697.1 L345 699.7 L344 699.7 L344 703.0 L343 703.0 L343 700.5 L342 700.5 L342 693.2 L341 693.2 L341 693.2 L340 693.2 L340 687.7 L339 687.7 L339 698.2 L338 698.2 L338 697.4 L337 697.4 L337 698.1 L336 698.1 L336 697.7 L335 697.7 L335 690.7 L334 690.7 L334 691.5 L333 691.5 L333 696.2 L332 696.2 L332 695.4 L331 695.4 L331 699.9 L330 699.9 L330 699.2 L329 699.2 L329 702.2 L328 702.2 L328 702.4 L327 702.4 L327 699.4 L326 699.4 L326 691.2 L325 691.2 L325 703.9 L324 703.9 L324 703.7 L323 703.7 L323 703.9 L322 703.9 L322 691.1 L321 691.1 L321 702.2 L320 702.2 L320 702.5 L319 702.5 L319 703.4 L318 703.4 L318 702.6 L317 702.6 L317 703.7 L316 703.7 L316 702.6 L315 702.6 L315 699.1 L314 699.1 L314 702.1 L313 702.1 L313 703.5 L312 703.5 L312 697.5 L311 697.5 L311 690.9 L310 690.9 L310 692.5 L309 692.5 L309 685.2 L308 685.2 L308 699.4 L307 699.4 L307 702.1 L306 702.1 L306 703.6 L305 703.6 L305 691.2 L304 691.2 L304 701.1 L303 701.1 L303 703.2 L302 703.2 L302 703.6 L301 703.6 L301 704.0 L300 704.0 L300 703.4 L299 703.4 L299 698.4 L298 698.4 L298 702.3 L297 702.3 L297 700.3 L296 700.3 L296 690.4 L295 690.4 L295 703.8 L294 703.8 L294 704.0 L293 704.0 L293 696.0 L292 696.0 L292 700.6 L291 700.6 L291 695.5 L290 695.5 L290 695.0 L289 695.0 L289 686.1 L288 686.1 L288 699.2 L287 699.2 L287 702.1 L286 702.1 L286 701.7 L285 701.7 L285 698.5 L284 698.5 L284 703.7 L283 703.7 L283 701.9 L282 701.9 L282 695.8 L281 695.8 L281 694.9 L280 694.9 L280 703.6 L279 703.6 L279 702.7 L278 702.7 L278 702.0 L277 702.0 L277 697.3 L276 697.3 L276 703.4 L275 703.4 L275 689.7 L274 689.7 L274 695.7 L273 695.7 L273 701.3 L272 701.3 L272 703.3 L271 703.3 L271 702.6 L270 702.6 L270 691.4 L269 691.4 L269 695.5 L268 695.5 L268 689.7 L267 689.7 L267 688.6 L266 688.6 L266 690.5 L265 690.5 L265 690.1 L264 690.1 L264 688.1 L263 688.1ZM263 721.6 L264 721.6 L264 720.2 L265 720.2 L265 718.4 L266 718.4 L266 716.2 L267 716.2 L267 715.7 L268 715.7 L268 711.2 L269 711.2 L269 709.6 L270 709.6 L270 717.5 L271 717.5 L271 716.5 L272 716.5 L272 715.5 L273 715.5 L273 712.6 L274 712.6 L274 711.7 L275 711.7 L275 709.1 L276 709.1 L276 713.5 L277 713.5 L277 709.4 L278 709.4 L278 706.6 L279 706.6 L279 710.7 L280 710.7 L280 707.7 L281 707.7 L281 708.9 L282 708.9 L282 719.7 L283 719.7 L283 706.2 L284 706.2 L284 710.8 L285 710.8 L285 706.8 L286 706.8 L286 708.6 L287 708.6 L287 710.8 L288 710.8 L288 720.3 L289 720.3 L289 706.2 L290 706.2 L290 706.2 L291 706.2 L291 706.0 L292 706.0 L292 706.2 L293 706.2 L293 706.6 L294 706.6 L294 707.5 L295 707.5 L295 713.9 L296 713.9 L296 720.6 L297 720.6 L297 709.5 L298 709.5 L298 708.1 L299 708.1 L299 717.5 L300 717.5 L300 708.3 L301 708.3 L301 707.1 L302 707.1 L302 706.7 L303 706.7 L303 711.8 L304 711.8 L304 715.1 L305 715.1 L305 706.3 L306 706.3 L306 709.2 L307 709.2 L307 706.3 L308 706.3 L308 706.5 L309 706.5 L309 707.1 L310 707.1 L310 710.5 L311 710.5 L311 709.6 L312 709.6 L312 707.8 L313 707.8 L313 706.5 L314 706.5 L314 707.8 L315 707.8 L315 712.4 L316 712.4 L316 712.0 L317 712.0 L317 709.1 L318 709.1 L318 710.2 L319 710.2 L319 718.4 L320 718.4 L320 708.0 L321 708.0 L321 707.5 L322 707.5 L322 715.2 L323 715.2 L323 712.3 L324 712.3 L324 708.6 L325 708.6 L325 717.8 L326 717.8 L326 706.4 L327 706.4 L327 708.1 L328 708.1 L328 708.8 L329 708.8 L329 721.0 L330 721.0 L330 712.1 L331 712.1 L331 710.5 L332 710.5 L332 711.7 L333 711.7 L333 717.8 L334 717.8 L334 710.4 L335 710.4 L335 711.5 L336 711.5 L336 709.7 L337 709.7 L337 709.9 L338 709.9 L338 720.2 L339 720.2 L339 712.7 L340 712.7 L340 713.8 L341 713.8 L341 709.6 L342 709.6 L342 708.3 L343 708.3 L343 714.4 L344 714.4 L344 710.7 L345 710.7 L345 708.0 L346 708.0 L346 708.1 L347 708.1 L347 707.3 L348 707.3 L348 707.7 L349 707.7 L349 706.5 L350 706.5 L350 706.2 L351 706.2 L351 706.4 L352 706.4 L352 714.2 L353 714.2 L353 706.6 L354 706.6 L354 706.5 L355 706.5 L355 708.4 L356 708.4 L356 708.2 L357 708.2 L357 708.8 L358 708.8 L358 707.4 L359 707.4 L359 707.6 L360 707.6 L360 710.5 L361 710.5 L361 711.2 L362 711.2 L362 714.0 L363 714.0 L363 715.6 L364 715.6 L364 716.3 L365 716.3 L365 717.8 L366 717.8 L366 719.2 L367 719.2 L367 720.2 L368 720.2 L368 721.5 L369 721.5 L369 722.7 L370 722.7 L370 723.9 L371 723.9 L371 724.0 L372 724.0 L372 733.0 L371 733.0 L371 740.2 L370 740.2 L370 734.5 L369 734.5 L369 736.0 L368 736.0 L368 737.5 L367 737.5 L367 738.1 L366 738.1 L366 739.5 L365 739.5 L365 742.0 L364 742.0 L364 747.1 L363 747.1 L363 742.1 L362 742.1 L362 746.5 L361 746.5 L361 750.3 L360 750.3 L360 748.6 L359 748.6 L359 750.9 L358 750.9 L358 750.8 L357 750.8 L357 745.7 L356 745.7 L356 750.2 L355 750.2 L355 749.7 L354 749.7 L354 749.0 L353 749.0 L353 748.5 L352 748.5 L352 750.4 L351 750.4 L351 748.8 L350 748.8 L350 750.5 L349 750.5 L349 750.7 L348 750.7 L348 747.9 L347 747.9 L347 750.8 L346 750.8 L346 749.0 L345 749.0 L345 750.1 L344 750.1 L344 748.8 L343 748.8 L343 747.7 L342 747.7 L342 745.2 L341 745.2 L341 740.3 L340 740.3 L340 745.3 L339 745.3 L339 744.1 L338 744.1 L338 745.0 L337 745.0 L337 746.2 L336 746.2 L336 744.7 L335 744.7 L335 745.3 L334 745.3 L334 743.4 L333 743.4 L333 742.3 L332 742.3 L332 739.4 L331 739.4 L331 746.4 L330 746.4 L330 746.4 L329 746.4 L329 739.1 L328 739.1 L328 743.7 L327 743.7 L327 748.8 L326 748.8 L326 738.3 L325 738.3 L325 746.2 L324 746.2 L324 742.8 L323 742.8 L323 740.4 L322 740.4 L322 743.7 L321 743.7 L321 750.4 L320 750.4 L320 740.9 L319 740.9 L319 743.5 L318 743.5 L318 743.1 L317 743.1 L317 740.1 L316 740.1 L316 736.8 L315 736.8 L315 742.2 L314 742.2 L314 747.0 L313 747.0 L313 746.0 L312 746.0 L312 745.5 L311 745.5 L311 746.6 L310 746.6 L310 742.4 L309 742.4 L309 748.5 L308 748.5 L308 750.0 L307 750.0 L307 737.9 L306 737.9 L306 745.0 L305 745.0 L305 748.3 L304 748.3 L304 748.9 L303 748.9 L303 739.1 L302 739.1 L302 741.1 L301 741.1 L301 741.0 L300 741.0 L300 743.7 L299 743.7 L299 736.9 L298 736.9 L298 746.1 L297 746.1 L297 741.9 L296 741.9 L296 743.7 L295 743.7 L295 745.8 L294 745.8 L294 740.2 L293 740.2 L293 738.5 L292 738.5 L292 741.6 L291 741.6 L291 741.5 L290 741.5 L290 749.4 L289 749.4 L289 738.5 L288 738.5 L288 740.9 L287 740.9 L287 742.4 L286 742.4 L286 744.2 L285 744.2 L285 740.5 L284 740.5 L284 740.1 L283 740.1 L283 743.4 L282 743.4 L282 745.1 L281 745.1 L281 744.9 L280 744.9 L280 738.7 L279 738.7 L279 743.6 L278 743.6 L278 746.5 L277 746.5 L277 746.6 L276 746.6 L276 738.5 L275 738.5 L275 742.5 L274 742.5 L274 742.1 L273 742.1 L273 744.1 L272 744.1 L272 740.6 L271 740.6 L271 748.2 L270 748.2 L270 744.7 L269 744.7 L269 740.0 L268 740.0 L268 745.7 L267 745.7 L267 740.7 L266 740.7 L266 742.3 L265 742.3 L265 738.7 L264 738.7 L264 739.6 L263 739.6Z"/>
<rect x="263.9" y="658.5" width="106.2" height="93" rx="3.5" fill="none" stroke="#8db6f6" stroke-width="1.1"/>
<rect x="371.3" y="658" width="124" height="94" rx="3" fill="#b9d3fa"/>
<path clip-path="url(#cp4)" fill="#3b76d7" d="M371 659.0 L372 659.0 L372 659.8 L373 659.8 L373 661.2 L374 661.2 L374 659.3 L375 659.3 L375 659.3 L376 659.3 L376 659.0 L377 659.0 L377 659.0 L378 659.0 L378 659.0 L379 659.0 L379 659.0 L380 659.0 L380 659.8 L381 659.8 L381 659.3 L382 659.3 L382 661.3 L383 661.3 L383 659.3 L384 659.3 L384 659.0 L385 659.0 L385 659.2 L386 659.2 L386 660.1 L387 660.1 L387 659.4 L388 659.4 L388 660.3 L389 660.3 L389 659.3 L390 659.3 L390 659.1 L391 659.1 L391 659.0 L392 659.0 L392 659.0 L393 659.0 L393 663.2 L394 663.2 L394 666.0 L395 666.0 L395 664.0 L396 664.0 L396 665.2 L397 665.2 L397 671.1 L398 671.1 L398 667.1 L399 667.1 L399 665.8 L400 665.8 L400 665.2 L401 665.2 L401 669.0 L402 669.0 L402 665.7 L403 665.7 L403 668.0 L404 668.0 L404 661.6 L405 661.6 L405 672.7 L406 672.7 L406 671.0 L407 671.0 L407 663.5 L408 663.5 L408 673.1 L409 673.1 L409 669.1 L410 669.1 L410 670.5 L411 670.5 L411 668.0 L412 668.0 L412 667.6 L413 667.6 L413 672.2 L414 672.2 L414 668.4 L415 668.4 L415 666.6 L416 666.6 L416 670.5 L417 670.5 L417 669.3 L418 669.3 L418 666.1 L419 666.1 L419 665.2 L420 665.2 L420 664.3 L421 664.3 L421 667.7 L422 667.7 L422 663.7 L423 663.7 L423 662.4 L424 662.4 L424 666.8 L425 666.8 L425 660.3 L426 660.3 L426 666.1 L427 666.1 L427 665.1 L428 665.1 L428 662.0 L429 662.0 L429 661.6 L430 661.6 L430 665.2 L431 665.2 L431 666.0 L432 666.0 L432 660.9 L433 660.9 L433 663.8 L434 663.8 L434 662.3 L435 662.3 L435 662.0 L436 662.0 L436 667.7 L437 667.7 L437 660.5 L438 660.5 L438 660.7 L439 660.7 L439 659.9 L440 659.9 L440 665.5 L441 665.5 L441 663.0 L442 663.0 L442 663.4 L443 663.4 L443 661.4 L444 661.4 L444 664.0 L445 664.0 L445 665.9 L446 665.9 L446 661.3 L447 661.3 L447 662.9 L448 662.9 L448 661.7 L449 661.7 L449 663.6 L450 663.6 L450 660.0 L451 660.0 L451 664.3 L452 664.3 L452 660.9 L453 660.9 L453 661.6 L454 661.6 L454 660.8 L455 660.8 L455 660.6 L456 660.6 L456 666.9 L457 666.9 L457 666.3 L458 666.3 L458 665.4 L459 665.4 L459 661.3 L460 661.3 L460 661.6 L461 661.6 L461 663.3 L462 663.3 L462 661.3 L463 661.3 L463 664.8 L464 664.8 L464 661.7 L465 661.7 L465 663.7 L466 663.7 L466 661.9 L467 661.9 L467 660.8 L468 660.8 L468 665.5 L469 665.5 L469 661.1 L470 661.1 L470 667.1 L471 667.1 L471 661.5 L472 661.5 L472 661.9 L473 661.9 L473 661.3 L474 661.3 L474 665.8 L475 665.8 L475 662.4 L476 662.4 L476 665.3 L477 665.3 L477 666.9 L478 666.9 L478 667.6 L479 667.6 L479 661.1 L480 661.1 L480 663.2 L481 663.2 L481 662.0 L482 662.0 L482 664.1 L483 664.1 L483 662.4 L484 662.4 L484 663.4 L485 663.4 L485 665.5 L486 665.5 L486 660.8 L487 660.8 L487 663.3 L488 663.3 L488 661.3 L489 661.3 L489 661.8 L490 661.8 L490 662.1 L491 662.1 L491 661.9 L492 661.9 L492 663.7 L493 663.7 L493 664.7 L494 664.7 L494 667.8 L495 667.8 L495 668.1 L496 668.1 L496 668.9 L497 668.9 L497 694.0 L496 694.0 L496 694.1 L495 694.1 L495 695.1 L494 695.1 L494 696.3 L493 696.3 L493 694.1 L492 694.1 L492 700.4 L491 700.4 L491 702.8 L490 702.8 L490 702.6 L489 702.6 L489 704.0 L488 704.0 L488 703.2 L487 703.2 L487 703.4 L486 703.4 L486 702.3 L485 702.3 L485 696.4 L484 696.4 L484 702.7 L483 702.7 L483 703.6 L482 703.6 L482 694.5 L481 694.5 L481 695.6 L480 695.6 L480 696.1 L479 696.1 L479 703.0 L478 703.0 L478 701.2 L477 701.2 L477 703.7 L476 703.7 L476 703.4 L475 703.4 L475 699.1 L474 699.1 L474 703.7 L473 703.7 L473 699.3 L472 699.3 L472 703.9 L471 703.9 L471 703.3 L470 703.3 L470 703.6 L469 703.6 L469 696.6 L468 696.6 L468 703.7 L467 703.7 L467 703.3 L466 703.3 L466 697.7 L465 697.7 L465 700.1 L464 700.1 L464 699.9 L463 699.9 L463 698.1 L462 698.1 L462 701.4 L461 701.4 L461 692.7 L460 692.7 L460 702.3 L459 702.3 L459 695.9 L458 695.9 L458 691.1 L457 691.1 L457 702.8 L456 702.8 L456 701.4 L455 701.4 L455 703.7 L454 703.7 L454 703.7 L453 703.7 L453 702.4 L452 702.4 L452 701.5 L451 701.5 L451 694.7 L450 694.7 L450 696.3 L449 696.3 L449 697.7 L448 697.7 L448 702.9 L447 702.9 L447 692.9 L446 692.9 L446 704.0 L445 704.0 L445 701.5 L444 701.5 L444 701.5 L443 701.5 L443 702.4 L442 702.4 L442 699.8 L441 699.8 L441 688.9 L440 688.9 L440 689.6 L439 689.6 L439 703.6 L438 703.6 L438 697.5 L437 697.5 L437 695.9 L436 695.9 L436 692.3 L435 692.3 L435 703.6 L434 703.6 L434 704.0 L433 704.0 L433 704.0 L432 704.0 L432 703.6 L431 703.6 L431 704.0 L430 704.0 L430 703.2 L429 703.2 L429 702.8 L428 702.8 L428 703.9 L427 703.9 L427 703.7 L426 703.7 L426 703.3 L425 703.3 L425 702.5 L424 702.5 L424 702.2 L423 702.2 L423 698.7 L422 698.7 L422 697.6 L421 697.6 L421 699.9 L420 699.9 L420 699.1 L419 699.1 L419 696.3 L418 696.3 L418 691.2 L417 691.2 L417 696.1 L416 696.1 L416 695.8 L415 695.8 L415 696.7 L414 696.7 L414 694.7 L413 694.7 L413 697.2 L412 697.2 L412 694.4 L411 694.4 L411 693.4 L410 693.4 L410 698.0 L409 698.0 L409 690.2 L408 690.2 L408 695.8 L407 695.8 L407 688.9 L406 688.9 L406 695.5 L405 695.5 L405 695.3 L404 695.3 L404 698.0 L403 698.0 L403 698.2 L402 698.2 L402 697.5 L401 697.5 L401 693.0 L400 693.0 L400 686.9 L399 686.9 L399 694.4 L398 694.4 L398 696.0 L397 696.0 L397 696.9 L396 696.9 L396 688.5 L395 688.5 L395 689.4 L394 689.4 L394 701.5 L393 701.5 L393 703.6 L392 703.6 L392 702.6 L391 702.6 L391 698.9 L390 698.9 L390 703.8 L389 703.8 L389 703.8 L388 703.8 L388 703.5 L387 703.5 L387 698.8 L386 698.8 L386 703.8 L385 703.8 L385 703.1 L384 703.1 L384 703.6 L383 703.6 L383 703.9 L382 703.9 L382 701.0 L381 701.0 L381 700.7 L380 700.7 L380 703.9 L379 703.9 L379 702.9 L378 702.9 L378 703.7 L377 703.7 L377 702.8 L376 702.8 L376 701.1 L375 701.1 L375 701.4 L374 701.4 L374 704.0 L373 704.0 L373 703.0 L372 703.0 L372 703.1 L371 703.1ZM371 706.0 L372 706.0 L372 710.3 L373 710.3 L373 709.1 L374 709.1 L374 706.4 L375 706.4 L375 708.9 L376 708.9 L376 706.4 L377 706.4 L377 706.3 L378 706.3 L378 707.4 L379 707.4 L379 706.0 L380 706.0 L380 708.4 L381 708.4 L381 706.4 L382 706.4 L382 706.1 L383 706.1 L383 706.1 L384 706.1 L384 707.5 L385 707.5 L385 706.1 L386 706.1 L386 707.8 L387 707.8 L387 706.2 L388 706.2 L388 707.4 L389 707.4 L389 707.0 L390 707.0 L390 708.6 L391 708.6 L391 706.2 L392 706.2 L392 709.3 L393 709.3 L393 708.2 L394 708.2 L394 725.1 L395 725.1 L395 719.2 L396 719.2 L396 722.9 L397 722.9 L397 714.1 L398 714.1 L398 714.6 L399 714.6 L399 714.1 L400 714.1 L400 714.2 L401 714.2 L401 720.4 L402 720.4 L402 714.4 L403 714.4 L403 714.0 L404 714.0 L404 714.1 L405 714.1 L405 712.9 L406 712.9 L406 712.2 L407 712.2 L407 716.9 L408 716.9 L408 719.3 L409 719.3 L409 711.7 L410 711.7 L410 723.3 L411 723.3 L411 713.7 L412 713.7 L412 711.9 L413 711.9 L413 712.1 L414 712.1 L414 712.1 L415 712.1 L415 712.5 L416 712.5 L416 712.6 L417 712.6 L417 723.5 L418 723.5 L418 711.3 L419 711.3 L419 712.8 L420 712.8 L420 709.8 L421 709.8 L421 709.0 L422 709.0 L422 716.6 L423 716.6 L423 709.1 L424 709.1 L424 710.9 L425 710.9 L425 710.7 L426 710.7 L426 708.8 L427 708.8 L427 707.2 L428 707.2 L428 706.3 L429 706.3 L429 711.6 L430 711.6 L430 706.0 L431 706.0 L431 717.9 L432 717.9 L432 706.0 L433 706.0 L433 716.9 L434 716.9 L434 706.1 L435 706.1 L435 706.8 L436 706.8 L436 706.3 L437 706.3 L437 706.0 L438 706.0 L438 706.1 L439 706.1 L439 710.6 L440 710.6 L440 707.7 L441 707.7 L441 717.3 L442 717.3 L442 708.2 L443 708.2 L443 708.4 L444 708.4 L444 715.4 L445 715.4 L445 706.5 L446 706.5 L446 708.7 L447 708.7 L447 707.7 L448 707.7 L448 706.2 L449 706.2 L449 706.7 L450 706.7 L450 708.0 L451 708.0 L451 716.7 L452 716.7 L452 706.1 L453 706.1 L453 708.1 L454 708.1 L454 707.0 L455 707.0 L455 716.4 L456 716.4 L456 708.2 L457 708.2 L457 708.8 L458 708.8 L458 715.3 L459 715.3 L459 707.6 L460 707.6 L460 706.3 L461 706.3 L461 712.3 L462 712.3 L462 706.3 L463 706.3 L463 714.0 L464 714.0 L464 707.3 L465 707.3 L465 713.1 L466 713.1 L466 708.1 L467 708.1 L467 721.9 L468 721.9 L468 717.8 L469 717.8 L469 718.3 L470 718.3 L470 712.5 L471 712.5 L471 710.5 L472 710.5 L472 709.0 L473 709.0 L473 712.3 L474 712.3 L474 708.0 L475 708.0 L475 707.3 L476 707.3 L476 706.4 L477 706.4 L477 713.5 L478 713.5 L478 709.1 L479 709.1 L479 714.9 L480 714.9 L480 710.6 L481 710.6 L481 715.1 L482 715.1 L482 708.0 L483 708.0 L483 717.4 L484 717.4 L484 706.7 L485 706.7 L485 706.5 L486 706.5 L486 709.0 L487 709.0 L487 706.3 L488 706.3 L488 711.3 L489 711.3 L489 709.8 L490 709.8 L490 717.1 L491 717.1 L491 710.9 L492 710.9 L492 710.3 L493 710.3 L493 712.1 L494 712.1 L494 715.0 L495 715.0 L495 716.6 L496 716.6 L496 716.9 L497 716.9 L497 740.4 L496 740.4 L496 741.5 L495 741.5 L495 742.8 L494 742.8 L494 744.8 L493 744.8 L493 747.0 L492 747.0 L492 748.5 L491 748.5 L491 749.4 L490 749.4 L490 744.6 L489 744.6 L489 749.6 L488 749.6 L488 745.8 L487 745.8 L487 749.5 L486 749.5 L486 746.9 L485 746.9 L485 750.5 L484 750.5 L484 749.1 L483 749.1 L483 749.0 L482 749.0 L482 748.9 L481 748.9 L481 747.3 L480 747.3 L480 749.2 L479 749.2 L479 743.8 L478 743.8 L478 748.8 L477 748.8 L477 749.3 L476 749.3 L476 748.0 L475 748.0 L475 749.9 L474 749.9 L474 745.5 L473 745.5 L473 750.8 L472 750.8 L472 746.2 L471 746.2 L471 749.7 L470 749.7 L470 744.7 L469 744.7 L469 747.6 L468 747.6 L468 747.3 L467 747.3 L467 750.3 L466 750.3 L466 745.1 L465 745.1 L465 745.6 L464 745.6 L464 750.9 L463 750.9 L463 750.7 L462 750.7 L462 747.0 L461 747.0 L461 750.1 L460 750.1 L460 747.5 L459 747.5 L459 749.2 L458 749.2 L458 743.1 L457 743.1 L457 741.6 L456 741.6 L456 743.1 L455 743.1 L455 749.7 L454 749.7 L454 749.6 L453 749.6 L453 748.8 L452 748.8 L452 745.5 L451 745.5 L451 750.5 L450 750.5 L450 750.0 L449 750.0 L449 745.5 L448 745.5 L448 750.9 L447 750.9 L447 749.0 L446 749.0 L446 750.6 L445 750.6 L445 749.7 L444 749.7 L444 742.4 L443 742.4 L443 746.7 L442 746.7 L442 743.1 L441 743.1 L441 746.1 L440 746.1 L440 749.7 L439 749.7 L439 743.7 L438 743.7 L438 748.6 L437 748.6 L437 742.7 L436 742.7 L436 747.6 L435 747.6 L435 749.5 L434 749.5 L434 746.5 L433 746.5 L433 750.2 L432 750.2 L432 744.6 L431 744.6 L431 749.4 L430 749.4 L430 749.3 L429 749.3 L429 750.0 L428 750.0 L428 747.6 L427 747.6 L427 745.8 L426 745.8 L426 745.4 L425 745.4 L425 749.1 L424 749.1 L424 748.6 L423 748.6 L423 748.4 L422 748.4 L422 744.3 L421 744.3 L421 739.0 L420 739.0 L420 745.0 L419 745.0 L419 738.0 L418 738.0 L418 738.4 L417 738.4 L417 741.0 L416 741.0 L416 743.3 L415 743.3 L415 742.3 L414 742.3 L414 741.2 L413 741.2 L413 740.7 L412 740.7 L412 744.5 L411 744.5 L411 739.3 L410 739.3 L410 744.7 L409 744.7 L409 740.0 L408 740.0 L408 737.3 L407 737.3 L407 743.2 L406 743.2 L406 740.6 L405 740.6 L405 737.5 L404 737.5 L404 743.0 L403 743.0 L403 736.7 L402 736.7 L402 741.7 L401 741.7 L401 742.0 L400 742.0 L400 739.5 L399 739.5 L399 736.6 L398 736.6 L398 745.4 L397 745.4 L397 743.5 L396 743.5 L396 740.3 L395 740.3 L395 742.4 L394 742.4 L394 748.6 L393 748.6 L393 750.1 L392 750.1 L392 750.4 L391 750.4 L391 748.4 L390 748.4 L390 750.1 L389 750.1 L389 750.7 L388 750.7 L388 750.9 L387 750.9 L387 750.6 L386 750.6 L386 750.4 L385 750.4 L385 750.8 L384 750.8 L384 750.9 L383 750.9 L383 750.8 L382 750.8 L382 750.9 L381 750.9 L381 750.2 L380 750.2 L380 750.5 L379 750.5 L379 750.4 L378 750.4 L378 748.5 L377 748.5 L377 750.2 L376 750.2 L376 749.7 L375 749.7 L375 750.5 L374 750.5 L374 749.5 L373 749.5 L373 748.6 L372 748.6 L372 748.5 L371 748.5Z"/>
<rect x="371.8" y="658.5" width="123" height="93" rx="3.5" fill="none" stroke="#8db6f6" stroke-width="1.1"/>
<rect x="497.6" y="658" width="83.8" height="94" rx="3" fill="#b9d3fa"/>
<path clip-path="url(#cp5)" fill="#3b76d7" d="M497 667.5 L498 667.5 L498 663.1 L499 663.1 L499 669.1 L500 669.1 L500 665.5 L501 665.5 L501 667.7 L502 667.7 L502 666.7 L503 666.7 L503 668.4 L504 668.4 L504 665.6 L505 665.6 L505 663.8 L506 663.8 L506 662.0 L507 662.0 L507 661.5 L508 661.5 L508 661.1 L509 661.1 L509 664.7 L510 664.7 L510 662.2 L511 662.2 L511 670.1 L512 670.1 L512 665.6 L513 665.6 L513 666.7 L514 666.7 L514 666.1 L515 666.1 L515 669.1 L516 669.1 L516 664.9 L517 664.9 L517 663.1 L518 663.1 L518 667.2 L519 667.2 L519 666.0 L520 666.0 L520 664.2 L521 664.2 L521 665.3 L522 665.3 L522 666.1 L523 666.1 L523 670.6 L524 670.6 L524 665.7 L525 665.7 L525 666.1 L526 666.1 L526 662.5 L527 662.5 L527 660.6 L528 660.6 L528 662.3 L529 662.3 L529 663.6 L530 663.6 L530 660.2 L531 660.2 L531 664.2 L532 664.2 L532 668.7 L533 668.7 L533 666.9 L534 666.9 L534 664.8 L535 664.8 L535 665.0 L536 665.0 L536 668.6 L537 668.6 L537 662.0 L538 662.0 L538 666.3 L539 666.3 L539 668.7 L540 668.7 L540 672.0 L541 672.0 L541 665.3 L542 665.3 L542 661.9 L543 661.9 L543 661.9 L544 661.9 L544 663.2 L545 663.2 L545 662.3 L546 662.3 L546 666.8 L547 666.8 L547 667.8 L548 667.8 L548 663.0 L549 663.0 L549 665.7 L550 665.7 L550 663.5 L551 663.5 L551 669.0 L552 669.0 L552 668.6 L553 668.6 L553 662.6 L554 662.6 L554 668.0 L555 668.0 L555 664.5 L556 664.5 L556 661.8 L557 661.8 L557 662.5 L558 662.5 L558 664.7 L559 664.7 L559 665.0 L560 665.0 L560 665.5 L561 665.5 L561 663.0 L562 663.0 L562 664.7 L563 664.7 L563 666.1 L564 666.1 L564 661.3 L565 661.3 L565 664.4 L566 664.4 L566 666.3 L567 666.3 L567 660.9 L568 660.9 L568 668.3 L569 668.3 L569 669.0 L570 669.0 L570 662.9 L571 662.9 L571 667.1 L572 667.1 L572 668.9 L573 668.9 L573 666.9 L574 666.9 L574 671.9 L575 671.9 L575 671.3 L576 671.3 L576 669.4 L577 669.4 L577 671.1 L578 671.1 L578 673.6 L579 673.6 L579 675.8 L580 675.8 L580 678.2 L581 678.2 L581 680.4 L582 680.4 L582 680.4 L583 680.4 L583 682.6 L582 682.6 L582 682.6 L581 682.6 L581 684.7 L580 684.7 L580 686.7 L579 686.7 L579 688.9 L578 688.9 L578 690.6 L577 690.6 L577 693.6 L576 693.6 L576 693.8 L575 693.8 L575 689.2 L574 689.2 L574 693.4 L573 693.4 L573 699.4 L572 699.4 L572 699.1 L571 699.1 L571 701.8 L570 701.8 L570 699.2 L569 699.2 L569 701.6 L568 701.6 L568 700.8 L567 700.8 L567 700.2 L566 700.2 L566 700.1 L565 700.1 L565 701.3 L564 701.3 L564 701.6 L563 701.6 L563 696.6 L562 696.6 L562 701.2 L561 701.2 L561 699.5 L560 699.5 L560 697.1 L559 697.1 L559 699.5 L558 699.5 L558 693.8 L557 693.8 L557 698.6 L556 698.6 L556 700.7 L555 700.7 L555 701.6 L554 701.6 L554 698.5 L553 698.5 L553 700.2 L552 700.2 L552 690.6 L551 690.6 L551 691.4 L550 691.4 L550 702.7 L549 702.7 L549 697.1 L548 697.1 L548 695.5 L547 695.5 L547 701.2 L546 701.2 L546 697.9 L545 697.9 L545 696.4 L544 696.4 L544 700.5 L543 700.5 L543 699.3 L542 699.3 L542 701.1 L541 701.1 L541 702.3 L540 702.3 L540 700.4 L539 700.4 L539 698.7 L538 698.7 L538 702.0 L537 702.0 L537 701.6 L536 701.6 L536 701.8 L535 701.8 L535 702.1 L534 702.1 L534 702.1 L533 702.1 L533 699.7 L532 699.7 L532 690.0 L531 690.0 L531 701.6 L530 701.6 L530 694.0 L529 694.0 L529 701.6 L528 701.6 L528 701.6 L527 701.6 L527 696.5 L526 696.5 L526 699.5 L525 699.5 L525 700.6 L524 700.6 L524 701.6 L523 701.6 L523 698.3 L522 698.3 L522 702.2 L521 702.2 L521 689.9 L520 689.9 L520 695.6 L519 695.6 L519 701.5 L518 701.5 L518 701.0 L517 701.0 L517 701.9 L516 701.9 L516 702.2 L515 702.2 L515 702.0 L514 702.0 L514 701.8 L513 701.8 L513 700.1 L512 700.1 L512 702.1 L511 702.1 L511 701.5 L510 701.5 L510 698.8 L509 698.8 L509 689.4 L508 689.4 L508 688.6 L507 688.6 L507 697.3 L506 697.3 L506 701.8 L505 701.8 L505 701.8 L504 701.8 L504 701.0 L503 701.0 L503 701.8 L502 701.8 L502 699.9 L501 699.9 L501 696.6 L500 696.6 L500 698.8 L499 698.8 L499 700.8 L498 700.8 L498 686.1 L497 686.1ZM497 710.7 L498 710.7 L498 709.6 L499 709.6 L499 709.2 L500 709.2 L500 711.8 L501 711.8 L501 708.8 L502 708.8 L502 720.5 L503 720.5 L503 714.3 L504 714.3 L504 709.3 L505 709.3 L505 708.2 L506 708.2 L506 714.5 L507 714.5 L507 708.9 L508 708.9 L508 712.4 L509 712.4 L509 718.7 L510 718.7 L510 708.0 L511 708.0 L511 710.9 L512 710.9 L512 708.7 L513 708.7 L513 711.0 L514 711.0 L514 711.0 L515 711.0 L515 709.6 L516 709.6 L516 720.2 L517 720.2 L517 710.4 L518 710.4 L518 708.5 L519 708.5 L519 710.1 L520 710.1 L520 709.0 L521 709.0 L521 709.2 L522 709.2 L522 708.7 L523 708.7 L523 708.1 L524 708.1 L524 707.9 L525 707.9 L525 714.3 L526 714.3 L526 710.3 L527 710.3 L527 718.2 L528 718.2 L528 710.4 L529 710.4 L529 722.5 L530 722.5 L530 711.6 L531 711.6 L531 711.9 L532 711.9 L532 708.3 L533 708.3 L533 713.6 L534 713.6 L534 714.3 L535 714.3 L535 710.0 L536 710.0 L536 721.6 L537 721.6 L537 719.3 L538 719.3 L538 707.4 L539 707.4 L539 708.0 L540 708.0 L540 710.6 L541 710.6 L541 708.1 L542 708.1 L542 707.4 L543 707.4 L543 708.5 L544 708.5 L544 712.3 L545 712.3 L545 708.4 L546 708.4 L546 707.8 L547 707.8 L547 709.9 L548 709.9 L548 709.4 L549 709.4 L549 711.8 L550 711.8 L550 711.1 L551 711.1 L551 710.9 L552 710.9 L552 711.6 L553 711.6 L553 712.2 L554 712.2 L554 708.6 L555 708.6 L555 707.9 L556 707.9 L556 707.4 L557 707.4 L557 707.6 L558 707.6 L558 708.6 L559 708.6 L559 710.1 L560 710.1 L560 711.5 L561 711.5 L561 712.6 L562 712.6 L562 714.9 L563 714.9 L563 708.1 L564 708.1 L564 708.0 L565 708.0 L565 711.0 L566 711.0 L566 715.5 L567 715.5 L567 708.2 L568 708.2 L568 709.0 L569 709.0 L569 710.0 L570 710.0 L570 715.4 L571 715.4 L571 717.6 L572 717.6 L572 711.5 L573 711.5 L573 717.3 L574 717.3 L574 721.8 L575 721.8 L575 716.9 L576 716.9 L576 720.9 L577 720.9 L577 720.8 L578 720.8 L578 721.1 L579 721.1 L579 723.1 L580 723.1 L580 725.3 L581 725.3 L581 727.4 L582 727.4 L582 727.4 L583 727.4 L583 729.6 L582 729.6 L582 729.6 L581 729.6 L581 731.7 L580 731.7 L580 733.7 L579 733.7 L579 736.6 L578 736.6 L578 737.2 L577 737.2 L577 739.8 L576 739.8 L576 741.1 L575 741.1 L575 741.5 L574 741.5 L574 741.0 L573 741.0 L573 744.7 L572 744.7 L572 747.0 L571 747.0 L571 740.8 L570 740.8 L570 738.1 L569 738.1 L569 747.5 L568 747.5 L568 740.6 L567 740.6 L567 746.4 L566 746.4 L566 739.2 L565 739.2 L565 744.5 L564 744.5 L564 743.6 L563 743.6 L563 748.3 L562 748.3 L562 747.1 L561 747.1 L561 747.1 L560 747.1 L560 743.6 L559 743.6 L559 744.7 L558 744.7 L558 741.3 L557 741.3 L557 748.7 L556 748.7 L556 745.8 L555 745.8 L555 740.7 L554 740.7 L554 742.1 L553 742.1 L553 746.0 L552 746.0 L552 746.2 L551 746.2 L551 743.7 L550 743.7 L550 747.7 L549 747.7 L549 739.6 L548 739.6 L548 745.6 L547 745.6 L547 740.3 L546 740.3 L546 737.6 L545 737.6 L545 741.8 L544 741.8 L544 746.1 L543 746.1 L543 746.8 L542 746.8 L542 744.0 L541 744.0 L541 746.7 L540 746.7 L540 744.5 L539 744.5 L539 743.2 L538 743.2 L538 743.3 L537 743.3 L537 746.7 L536 746.7 L536 745.6 L535 745.6 L535 746.3 L534 746.3 L534 748.1 L533 748.1 L533 742.9 L532 742.9 L532 748.1 L531 748.1 L531 742.7 L530 742.7 L530 740.4 L529 740.4 L529 749.0 L528 749.0 L528 748.2 L527 748.2 L527 748.6 L526 748.6 L526 747.2 L525 747.2 L525 748.6 L524 748.6 L524 746.5 L523 746.5 L523 748.0 L522 748.0 L522 746.3 L521 746.3 L521 743.5 L520 743.5 L520 741.8 L519 741.8 L519 739.0 L518 739.0 L518 746.8 L517 746.8 L517 746.5 L516 746.5 L516 739.3 L515 739.3 L515 746.9 L514 746.9 L514 744.9 L513 744.9 L513 746.9 L512 746.9 L512 748.3 L511 748.3 L511 743.5 L510 743.5 L510 740.0 L509 740.0 L509 740.2 L508 740.2 L508 741.7 L507 741.7 L507 747.4 L506 747.4 L506 745.4 L505 745.4 L505 745.5 L504 745.5 L504 747.6 L503 747.6 L503 747.0 L502 747.0 L502 739.6 L501 739.6 L501 743.2 L500 743.2 L500 741.2 L499 741.2 L499 746.5 L498 746.5 L498 741.4 L497 741.4Z"/>
<rect x="498.1" y="658.5" width="82.8" height="93" rx="3.5" fill="none" stroke="#8db6f6" stroke-width="1.1"/>
<rect x="583.4" y="658" width="155.4" height="94" rx="3" fill="#b9d3fa"/>
<path clip-path="url(#cp6)" fill="#3b76d7" d="M583 666.3 L584 666.3 L584 670.1 L585 670.1 L585 670.9 L586 670.9 L586 663.5 L587 663.5 L587 670.2 L588 670.2 L588 671.1 L589 671.1 L589 666.5 L590 666.5 L590 673.1 L591 673.1 L591 668.8 L592 668.8 L592 665.0 L593 665.0 L593 672.0 L594 672.0 L594 669.1 L595 669.1 L595 670.3 L596 670.3 L596 668.4 L597 668.4 L597 669.7 L598 669.7 L598 672.0 L599 672.0 L599 669.2 L600 669.2 L600 666.0 L601 666.0 L601 666.6 L602 666.6 L602 666.7 L603 666.7 L603 667.4 L604 667.4 L604 668.8 L605 668.8 L605 668.6 L606 668.6 L606 666.7 L607 666.7 L607 666.1 L608 666.1 L608 667.2 L609 667.2 L609 667.6 L610 667.6 L610 669.2 L611 669.2 L611 666.5 L612 666.5 L612 665.7 L613 665.7 L613 665.9 L614 665.9 L614 664.8 L615 664.8 L615 664.9 L616 664.9 L616 663.7 L617 663.7 L617 663.5 L618 663.5 L618 665.3 L619 665.3 L619 668.4 L620 668.4 L620 666.5 L621 666.5 L621 668.5 L622 668.5 L622 663.1 L623 663.1 L623 662.7 L624 662.7 L624 665.1 L625 665.1 L625 666.8 L626 666.8 L626 662.1 L627 662.1 L627 661.9 L628 661.9 L628 662.4 L629 662.4 L629 664.4 L630 664.4 L630 661.7 L631 661.7 L631 661.8 L632 661.8 L632 661.3 L633 661.3 L633 665.2 L634 665.2 L634 667.0 L635 667.0 L635 664.8 L636 664.8 L636 664.2 L637 664.2 L637 661.5 L638 661.5 L638 661.9 L639 661.9 L639 660.5 L640 660.5 L640 661.9 L641 661.9 L641 661.3 L642 661.3 L642 660.1 L643 660.1 L643 659.9 L644 659.9 L644 665.8 L645 665.8 L645 659.7 L646 659.7 L646 665.6 L647 665.6 L647 664.9 L648 664.9 L648 660.8 L649 660.8 L649 661.8 L650 661.8 L650 661.4 L651 661.4 L651 660.9 L652 660.9 L652 660.4 L653 660.4 L653 661.0 L654 661.0 L654 664.8 L655 664.8 L655 662.7 L656 662.7 L656 667.1 L657 667.1 L657 662.2 L658 662.2 L658 664.7 L659 664.7 L659 666.0 L660 666.0 L660 667.4 L661 667.4 L661 662.6 L662 662.6 L662 661.8 L663 661.8 L663 663.2 L664 663.2 L664 666.5 L665 666.5 L665 663.9 L666 663.9 L666 669.4 L667 669.4 L667 663.1 L668 663.1 L668 662.3 L669 662.3 L669 663.2 L670 663.2 L670 661.3 L671 661.3 L671 662.5 L672 662.5 L672 668.0 L673 668.0 L673 671.0 L674 671.0 L674 661.7 L675 661.7 L675 668.9 L676 668.9 L676 662.2 L677 662.2 L677 661.2 L678 661.2 L678 669.0 L679 669.0 L679 662.4 L680 662.4 L680 668.7 L681 668.7 L681 665.1 L682 665.1 L682 663.4 L683 663.4 L683 662.1 L684 662.1 L684 661.4 L685 661.4 L685 665.5 L686 665.5 L686 665.8 L687 665.8 L687 666.9 L688 666.9 L688 666.8 L689 666.8 L689 671.9 L690 671.9 L690 662.8 L691 662.8 L691 663.5 L692 663.5 L692 662.9 L693 662.9 L693 664.3 L694 664.3 L694 666.1 L695 666.1 L695 669.3 L696 669.3 L696 662.9 L697 662.9 L697 664.3 L698 664.3 L698 670.0 L699 670.0 L699 662.7 L700 662.7 L700 669.4 L701 669.4 L701 668.4 L702 668.4 L702 665.7 L703 665.7 L703 669.2 L704 669.2 L704 669.9 L705 669.9 L705 667.8 L706 667.8 L706 664.8 L707 664.8 L707 661.8 L708 661.8 L708 663.1 L709 663.1 L709 661.5 L710 661.5 L710 666.1 L711 666.1 L711 663.7 L712 663.7 L712 669.0 L713 669.0 L713 664.6 L714 664.6 L714 661.1 L715 661.1 L715 662.7 L716 662.7 L716 665.6 L717 665.6 L717 665.0 L718 665.0 L718 660.6 L719 660.6 L719 662.2 L720 662.2 L720 660.6 L721 660.6 L721 668.4 L722 668.4 L722 668.7 L723 668.7 L723 664.2 L724 664.2 L724 667.4 L725 667.4 L725 662.1 L726 662.1 L726 666.6 L727 666.6 L727 669.6 L728 669.6 L728 662.0 L729 662.0 L729 666.0 L730 666.0 L730 665.5 L731 665.5 L731 669.3 L732 669.3 L732 662.8 L733 662.8 L733 665.2 L734 665.2 L734 667.3 L735 667.3 L735 667.7 L736 667.7 L736 666.1 L737 666.1 L737 667.6 L738 667.6 L738 671.6 L739 671.6 L739 670.9 L740 670.9 L740 692.7 L739 692.7 L739 692.5 L738 692.5 L738 695.2 L737 695.2 L737 697.0 L736 697.0 L736 698.6 L735 698.6 L735 697.1 L734 697.1 L734 701.5 L733 701.5 L733 701.2 L732 701.2 L732 698.1 L731 698.1 L731 692.7 L730 692.7 L730 693.2 L729 693.2 L729 700.0 L728 700.0 L728 700.9 L727 700.9 L727 697.6 L726 697.6 L726 701.0 L725 701.0 L725 698.4 L724 698.4 L724 688.8 L723 688.8 L723 692.7 L722 692.7 L722 694.4 L721 694.4 L721 701.1 L720 701.1 L720 701.6 L719 701.6 L719 699.8 L718 699.8 L718 698.9 L717 698.9 L717 701.6 L716 701.6 L716 696.6 L715 696.6 L715 699.5 L714 699.5 L714 701.3 L713 701.3 L713 701.2 L712 701.2 L712 691.4 L711 691.4 L711 699.7 L710 699.7 L710 700.9 L709 700.9 L709 689.4 L708 689.4 L708 700.7 L707 700.7 L707 700.9 L706 700.9 L706 701.3 L705 701.3 L705 689.0 L704 689.0 L704 688.4 L703 688.4 L703 701.2 L702 701.2 L702 690.8 L701 690.8 L701 697.1 L700 697.1 L700 693.2 L699 693.2 L699 697.0 L698 697.0 L698 701.7 L697 701.7 L697 699.5 L696 699.5 L696 695.5 L695 695.5 L695 701.1 L694 701.1 L694 695.2 L693 695.2 L693 691.7 L692 691.7 L692 692.8 L691 692.8 L691 690.7 L690 690.7 L690 701.5 L689 701.5 L689 696.4 L688 696.4 L688 701.7 L687 701.7 L687 699.9 L686 699.9 L686 697.8 L685 697.8 L685 687.3 L684 687.3 L684 701.0 L683 701.0 L683 693.5 L682 693.5 L682 691.2 L681 691.2 L681 699.6 L680 699.6 L680 690.3 L679 690.3 L679 696.4 L678 696.4 L678 701.6 L677 701.6 L677 688.7 L676 688.7 L676 688.2 L675 688.2 L675 699.8 L674 699.8 L674 698.5 L673 698.5 L673 701.2 L672 701.2 L672 688.3 L671 688.3 L671 700.7 L670 700.7 L670 701.6 L669 701.6 L669 692.5 L668 692.5 L668 700.1 L667 700.1 L667 692.5 L666 692.5 L666 699.2 L665 699.2 L665 691.4 L664 691.4 L664 700.4 L663 700.4 L663 697.6 L662 697.6 L662 699.4 L661 699.4 L661 700.2 L660 700.2 L660 700.8 L659 700.8 L659 694.2 L658 694.2 L658 700.1 L657 700.1 L657 699.7 L656 699.7 L656 699.2 L655 699.2 L655 697.4 L654 697.4 L654 701.4 L653 701.4 L653 698.8 L652 698.8 L652 695.7 L651 695.7 L651 701.3 L650 701.3 L650 700.9 L649 700.9 L649 699.2 L648 699.2 L648 689.6 L647 689.6 L647 697.4 L646 697.4 L646 697.6 L645 697.6 L645 697.2 L644 697.2 L644 699.8 L643 699.8 L643 699.5 L642 699.5 L642 696.8 L641 696.8 L641 701.1 L640 701.1 L640 696.9 L639 696.9 L639 693.2 L638 693.2 L638 693.6 L637 693.6 L637 698.4 L636 698.4 L636 702.3 L635 702.3 L635 701.7 L634 701.7 L634 701.9 L633 701.9 L633 701.8 L632 701.8 L632 699.9 L631 699.9 L631 701.4 L630 701.4 L630 692.3 L629 692.3 L629 691.2 L628 691.2 L628 700.2 L627 700.2 L627 698.6 L626 698.6 L626 700.5 L625 700.5 L625 698.5 L624 698.5 L624 698.1 L623 698.1 L623 693.2 L622 693.2 L622 699.1 L621 699.1 L621 697.4 L620 697.4 L620 694.1 L619 694.1 L619 698.6 L618 698.6 L618 697.3 L617 697.3 L617 696.0 L616 696.0 L616 696.2 L615 696.2 L615 698.5 L614 698.5 L614 695.8 L613 695.8 L613 698.4 L612 698.4 L612 697.4 L611 697.4 L611 696.8 L610 696.8 L610 695.2 L609 695.2 L609 691.7 L608 691.7 L608 694.8 L607 694.8 L607 696.3 L606 696.3 L606 696.8 L605 696.8 L605 694.0 L604 694.0 L604 693.5 L603 693.5 L603 691.2 L602 691.2 L602 695.3 L601 695.3 L601 695.9 L600 695.9 L600 696.3 L599 696.3 L599 696.2 L598 696.2 L598 695.9 L597 695.9 L597 694.9 L596 694.9 L596 692.7 L595 692.7 L595 694.8 L594 694.8 L594 692.6 L593 692.6 L593 695.3 L592 695.3 L592 693.9 L591 693.9 L591 695.0 L590 695.0 L590 694.5 L589 694.5 L589 694.6 L588 694.6 L588 693.9 L587 693.9 L587 691.7 L586 691.7 L586 693.7 L585 693.7 L585 694.0 L584 694.0 L584 693.5 L583 693.5ZM583 719.7 L584 719.7 L584 716.7 L585 716.7 L585 715.9 L586 715.9 L586 717.7 L587 717.7 L587 715.9 L588 715.9 L588 716.1 L589 716.1 L589 715.8 L590 715.8 L590 715.1 L591 715.1 L591 715.2 L592 715.2 L592 716.5 L593 716.5 L593 715.3 L594 715.3 L594 716.3 L595 716.3 L595 715.1 L596 715.1 L596 716.6 L597 716.6 L597 714.9 L598 714.9 L598 715.1 L599 715.1 L599 717.4 L600 717.4 L600 715.0 L601 715.0 L601 715.7 L602 715.7 L602 721.1 L603 721.1 L603 714.5 L604 714.5 L604 714.6 L605 714.6 L605 715.6 L606 715.6 L606 713.7 L607 713.7 L607 713.2 L608 713.2 L608 715.3 L609 715.3 L609 712.7 L610 712.7 L610 713.1 L611 713.1 L611 717.4 L612 717.4 L612 712.7 L613 712.7 L613 714.0 L614 714.0 L614 718.7 L615 718.7 L615 714.7 L616 714.7 L616 717.5 L617 717.5 L617 712.2 L618 712.2 L618 715.6 L619 715.6 L619 711.3 L620 711.3 L620 716.0 L621 716.0 L621 715.8 L622 715.8 L622 712.2 L623 712.2 L623 711.5 L624 711.5 L624 711.6 L625 711.6 L625 714.0 L626 714.0 L626 717.3 L627 717.3 L627 709.6 L628 709.6 L628 708.9 L629 708.9 L629 711.2 L630 711.2 L630 708.7 L631 708.7 L631 714.7 L632 714.7 L632 712.5 L633 712.5 L633 711.2 L634 711.2 L634 717.2 L635 717.2 L635 717.1 L636 717.1 L636 711.6 L637 711.6 L637 711.6 L638 711.6 L638 709.5 L639 709.5 L639 711.2 L640 711.2 L640 708.1 L641 708.1 L641 707.3 L642 707.3 L642 708.3 L643 708.3 L643 710.5 L644 710.5 L644 709.2 L645 709.2 L645 709.3 L646 709.3 L646 717.9 L647 717.9 L647 708.5 L648 708.5 L648 712.0 L649 712.0 L649 719.4 L650 719.4 L650 708.3 L651 708.3 L651 708.8 L652 708.8 L652 710.0 L653 710.0 L653 709.6 L654 709.6 L654 710.5 L655 710.5 L655 714.7 L656 714.7 L656 720.7 L657 720.7 L657 710.1 L658 710.1 L658 709.6 L659 709.6 L659 708.8 L660 708.8 L660 710.3 L661 710.3 L661 719.5 L662 719.5 L662 709.0 L663 709.0 L663 718.5 L664 718.5 L664 719.3 L665 719.3 L665 715.6 L666 715.6 L666 710.1 L667 710.1 L667 717.8 L668 717.8 L668 708.4 L669 708.4 L669 711.1 L670 711.1 L670 711.7 L671 711.7 L671 711.3 L672 711.3 L672 712.1 L673 712.1 L673 717.9 L674 717.9 L674 710.2 L675 710.2 L675 711.6 L676 711.6 L676 708.9 L677 708.9 L677 708.3 L678 708.3 L678 714.1 L679 714.1 L679 709.8 L680 709.8 L680 711.3 L681 711.3 L681 718.9 L682 718.9 L682 711.2 L683 711.2 L683 720.7 L684 720.7 L684 710.8 L685 710.8 L685 711.7 L686 711.7 L686 710.4 L687 710.4 L687 711.0 L688 711.0 L688 710.8 L689 710.8 L689 713.9 L690 713.9 L690 714.4 L691 714.4 L691 708.8 L692 708.8 L692 708.4 L693 708.4 L693 711.0 L694 711.0 L694 709.6 L695 709.6 L695 717.8 L696 717.8 L696 710.6 L697 710.6 L697 712.8 L698 712.8 L698 710.0 L699 710.0 L699 708.6 L700 708.6 L700 712.1 L701 712.1 L701 708.9 L702 708.9 L702 715.0 L703 715.0 L703 711.6 L704 711.6 L704 709.8 L705 709.8 L705 709.9 L706 709.9 L706 711.7 L707 711.7 L707 710.6 L708 710.6 L708 710.8 L709 710.8 L709 712.2 L710 712.2 L710 711.9 L711 711.9 L711 711.0 L712 711.0 L712 708.4 L713 708.4 L713 713.1 L714 713.1 L714 721.4 L715 721.4 L715 710.2 L716 710.2 L716 719.3 L717 719.3 L717 711.5 L718 711.5 L718 712.1 L719 712.1 L719 718.8 L720 718.8 L720 709.4 L721 709.4 L721 713.1 L722 713.1 L722 711.9 L723 711.9 L723 708.8 L724 708.8 L724 709.1 L725 709.1 L725 709.7 L726 709.7 L726 709.1 L727 709.1 L727 716.0 L728 716.0 L728 710.4 L729 710.4 L729 718.5 L730 718.5 L730 708.3 L731 708.3 L731 712.4 L732 712.4 L732 710.6 L733 710.6 L733 718.8 L734 718.8 L734 715.3 L735 715.3 L735 711.6 L736 711.6 L736 716.0 L737 716.0 L737 715.0 L738 715.0 L738 717.0 L739 717.0 L739 717.5 L740 717.5 L740 738.5 L739 738.5 L739 740.3 L738 740.3 L738 743.6 L737 743.6 L737 743.8 L736 743.8 L736 743.7 L735 743.7 L735 742.5 L734 742.5 L734 748.4 L733 748.4 L733 745.6 L732 745.6 L732 745.0 L731 745.0 L731 744.1 L730 744.1 L730 748.7 L729 748.7 L729 748.7 L728 748.7 L728 747.3 L727 747.3 L727 743.9 L726 743.9 L726 739.3 L725 739.3 L725 740.9 L724 740.9 L724 743.2 L723 743.2 L723 746.7 L722 746.7 L722 747.4 L721 747.4 L721 750.0 L720 750.0 L720 746.4 L719 746.4 L719 741.4 L718 741.4 L718 747.1 L717 747.1 L717 748.8 L716 748.8 L716 749.3 L715 749.3 L715 742.9 L714 742.9 L714 748.0 L713 748.0 L713 741.6 L712 741.6 L712 740.4 L711 740.4 L711 738.5 L710 738.5 L710 739.2 L709 739.2 L709 740.2 L708 740.2 L708 747.4 L707 747.4 L707 745.1 L706 745.1 L706 746.5 L705 746.5 L705 742.2 L704 742.2 L704 746.4 L703 746.4 L703 745.5 L702 745.5 L702 745.0 L701 745.0 L701 749.5 L700 749.5 L700 745.7 L699 745.7 L699 744.7 L698 744.7 L698 744.1 L697 744.1 L697 744.1 L696 744.1 L696 746.4 L695 746.4 L695 739.4 L694 739.4 L694 744.5 L693 744.5 L693 742.0 L692 742.0 L692 745.2 L691 745.2 L691 739.4 L690 739.4 L690 743.5 L689 743.5 L689 745.8 L688 745.8 L688 740.9 L687 740.9 L687 745.5 L686 745.5 L686 744.4 L685 744.4 L685 747.5 L684 747.5 L684 745.8 L683 745.8 L683 742.4 L682 742.4 L682 745.9 L681 745.9 L681 742.7 L680 742.7 L680 738.8 L679 738.8 L679 740.9 L678 740.9 L678 746.7 L677 746.7 L677 743.5 L676 743.5 L676 749.5 L675 749.5 L675 747.0 L674 747.0 L674 744.9 L673 744.9 L673 747.1 L672 747.1 L672 742.5 L671 742.5 L671 743.4 L670 743.4 L670 745.7 L669 745.7 L669 740.7 L668 740.7 L668 739.8 L667 739.8 L667 747.4 L666 747.4 L666 739.7 L665 739.7 L665 741.6 L664 741.6 L664 745.6 L663 745.6 L663 741.3 L662 741.3 L662 742.8 L661 742.8 L661 746.2 L660 746.2 L660 742.0 L659 742.0 L659 739.2 L658 739.2 L658 744.0 L657 744.0 L657 746.8 L656 746.8 L656 742.3 L655 742.3 L655 746.1 L654 746.1 L654 745.5 L653 745.5 L653 745.2 L652 745.2 L652 740.9 L651 740.9 L651 741.2 L650 741.2 L650 747.2 L649 747.2 L649 749.6 L648 749.6 L648 745.1 L647 745.1 L647 748.7 L646 748.7 L646 746.6 L645 746.6 L645 742.8 L644 742.8 L644 748.5 L643 748.5 L643 745.9 L642 745.9 L642 748.9 L641 748.9 L641 744.3 L640 744.3 L640 745.2 L639 745.2 L639 747.7 L638 747.7 L638 749.5 L637 749.5 L637 749.7 L636 749.7 L636 750.0 L635 750.0 L635 746.3 L634 746.3 L634 748.6 L633 748.6 L633 747.0 L632 747.0 L632 747.4 L631 747.4 L631 748.6 L630 748.6 L630 747.7 L629 747.7 L629 744.5 L628 744.5 L628 746.2 L627 746.2 L627 745.8 L626 745.8 L626 747.1 L625 747.1 L625 745.3 L624 745.3 L624 743.7 L623 743.7 L623 745.6 L622 745.6 L622 741.7 L621 741.7 L621 745.2 L620 745.2 L620 744.0 L619 744.0 L619 741.2 L618 741.2 L618 744.9 L617 744.9 L617 744.3 L616 744.3 L616 743.8 L615 743.8 L615 742.6 L614 742.6 L614 743.7 L613 743.7 L613 739.8 L612 739.8 L612 744.9 L611 744.9 L611 745.0 L610 745.0 L610 743.7 L609 743.7 L609 740.2 L608 740.2 L608 742.9 L607 742.9 L607 744.4 L606 744.4 L606 743.4 L605 743.4 L605 742.7 L604 742.7 L604 743.5 L603 743.5 L603 742.3 L602 742.3 L602 743.0 L601 743.0 L601 741.8 L600 741.8 L600 738.7 L599 738.7 L599 738.7 L598 738.7 L598 742.3 L597 742.3 L597 741.6 L596 741.6 L596 740.5 L595 740.5 L595 740.9 L594 740.9 L594 739.6 L593 739.6 L593 737.9 L592 737.9 L592 737.9 L591 737.9 L591 741.6 L590 741.6 L590 740.4 L589 740.4 L589 740.0 L588 740.0 L588 740.4 L587 740.4 L587 739.6 L586 739.6 L586 737.4 L585 737.4 L585 739.5 L584 739.5 L584 739.8 L583 739.8Z"/>
<rect x="583.9" y="658.5" width="154.4" height="93" rx="3.5" fill="none" stroke="#8db6f6" stroke-width="1.1"/>
<rect x="740.3" y="658" width="99.5" height="94" rx="3" fill="#b9d3fa"/>
<path clip-path="url(#cp7)" fill="#3b76d7" d="M740 663.3 L741 663.3 L741 661.6 L742 661.6 L742 662.8 L743 662.8 L743 660.3 L744 660.3 L744 659.2 L745 659.2 L745 660.5 L746 660.5 L746 659.5 L747 659.5 L747 659.0 L748 659.0 L748 659.0 L749 659.0 L749 661.2 L750 661.2 L750 659.2 L751 659.2 L751 659.2 L752 659.2 L752 661.9 L753 661.9 L753 659.2 L754 659.2 L754 660.3 L755 660.3 L755 659.0 L756 659.0 L756 659.2 L757 659.2 L757 659.2 L758 659.2 L758 659.0 L759 659.0 L759 660.1 L760 660.1 L760 659.1 L761 659.1 L761 660.6 L762 660.6 L762 659.3 L763 659.3 L763 662.0 L764 662.0 L764 659.7 L765 659.7 L765 661.2 L766 661.2 L766 659.3 L767 659.3 L767 662.6 L768 662.6 L768 659.5 L769 659.5 L769 659.8 L770 659.8 L770 659.3 L771 659.3 L771 659.5 L772 659.5 L772 659.1 L773 659.1 L773 659.6 L774 659.6 L774 660.7 L775 660.7 L775 659.2 L776 659.2 L776 659.2 L777 659.2 L777 659.5 L778 659.5 L778 659.0 L779 659.0 L779 659.0 L780 659.0 L780 659.5 L781 659.5 L781 659.0 L782 659.0 L782 659.0 L783 659.0 L783 660.1 L784 660.1 L784 660.6 L785 660.6 L785 659.9 L786 659.9 L786 663.4 L787 663.4 L787 663.0 L788 663.0 L788 664.8 L789 664.8 L789 667.8 L790 667.8 L790 666.8 L791 666.8 L791 663.1 L792 663.1 L792 661.9 L793 661.9 L793 661.2 L794 661.2 L794 665.3 L795 665.3 L795 664.3 L796 664.3 L796 664.4 L797 664.4 L797 665.5 L798 665.5 L798 661.2 L799 661.2 L799 663.1 L800 663.1 L800 664.5 L801 664.5 L801 662.0 L802 662.0 L802 661.5 L803 661.5 L803 664.4 L804 664.4 L804 661.9 L805 661.9 L805 661.8 L806 661.8 L806 662.8 L807 662.8 L807 660.8 L808 660.8 L808 659.8 L809 659.8 L809 659.4 L810 659.4 L810 659.0 L811 659.0 L811 659.0 L812 659.0 L812 659.0 L813 659.0 L813 659.9 L814 659.9 L814 660.0 L815 660.0 L815 659.6 L816 659.6 L816 659.2 L817 659.2 L817 659.0 L818 659.0 L818 659.1 L819 659.1 L819 660.5 L820 660.5 L820 659.7 L821 659.7 L821 659.0 L822 659.0 L822 659.1 L823 659.1 L823 659.9 L824 659.9 L824 660.2 L825 660.2 L825 661.7 L826 661.7 L826 659.0 L827 659.0 L827 659.1 L828 659.1 L828 659.0 L829 659.0 L829 659.4 L830 659.4 L830 659.5 L831 659.5 L831 659.4 L832 659.4 L832 659.7 L833 659.7 L833 659.5 L834 659.5 L834 660.0 L835 660.0 L835 660.6 L836 660.6 L836 659.7 L837 659.7 L837 660.9 L838 660.9 L838 662.4 L839 662.4 L839 661.2 L840 661.2 L840 661.4 L841 661.4 L841 701.7 L840 701.7 L840 699.4 L839 699.4 L839 701.8 L838 701.8 L838 702.4 L837 702.4 L837 702.7 L836 702.7 L836 702.6 L835 702.6 L835 703.1 L834 703.1 L834 703.5 L833 703.5 L833 703.8 L832 703.8 L832 702.3 L831 702.3 L831 700.2 L830 700.2 L830 698.4 L829 698.4 L829 702.7 L828 702.7 L828 700.7 L827 700.7 L827 696.9 L826 696.9 L826 699.5 L825 699.5 L825 703.2 L824 703.2 L824 704.0 L823 704.0 L823 700.5 L822 700.5 L822 701.8 L821 701.8 L821 703.1 L820 703.1 L820 703.3 L819 703.3 L819 703.0 L818 703.0 L818 703.5 L817 703.5 L817 703.7 L816 703.7 L816 702.3 L815 702.3 L815 702.0 L814 702.0 L814 703.1 L813 703.1 L813 702.6 L812 702.6 L812 700.4 L811 700.4 L811 702.9 L810 702.9 L810 702.9 L809 702.9 L809 701.8 L808 701.8 L808 699.7 L807 699.7 L807 695.3 L806 695.3 L806 699.9 L805 699.9 L805 699.3 L804 699.3 L804 701.2 L803 701.2 L803 701.6 L802 701.6 L802 698.9 L801 698.9 L801 701.7 L800 701.7 L800 689.7 L799 689.7 L799 699.4 L798 699.4 L798 701.6 L797 701.6 L797 701.5 L796 701.5 L796 696.8 L795 696.8 L795 700.4 L794 700.4 L794 693.9 L793 693.9 L793 700.4 L792 700.4 L792 699.5 L791 699.5 L791 700.8 L790 700.8 L790 694.8 L789 694.8 L789 692.7 L788 692.7 L788 700.2 L787 700.2 L787 701.3 L786 701.3 L786 701.2 L785 701.2 L785 703.3 L784 703.3 L784 703.6 L783 703.6 L783 703.3 L782 703.3 L782 703.8 L781 703.8 L781 701.9 L780 701.9 L780 704.0 L779 704.0 L779 703.8 L778 703.8 L778 703.8 L777 703.8 L777 703.3 L776 703.3 L776 702.9 L775 702.9 L775 702.4 L774 702.4 L774 701.4 L773 701.4 L773 703.8 L772 703.8 L772 704.0 L771 704.0 L771 703.6 L770 703.6 L770 702.5 L769 702.5 L769 701.6 L768 701.6 L768 696.2 L767 696.2 L767 700.7 L766 700.7 L766 702.0 L765 702.0 L765 700.3 L764 700.3 L764 702.2 L763 702.2 L763 691.2 L762 691.2 L762 701.0 L761 701.0 L761 691.3 L760 691.3 L760 701.1 L759 701.1 L759 699.2 L758 699.2 L758 689.0 L757 689.0 L757 690.3 L756 690.3 L756 700.6 L755 700.6 L755 701.4 L754 701.4 L754 701.8 L753 701.8 L753 702.3 L752 702.3 L752 696.2 L751 696.2 L751 701.8 L750 701.8 L750 701.4 L749 701.4 L749 698.5 L748 698.5 L748 698.2 L747 698.2 L747 700.1 L746 700.1 L746 698.8 L745 698.8 L745 703.8 L744 703.8 L744 699.0 L743 699.0 L743 699.7 L742 699.7 L742 696.2 L741 696.2 L741 693.9 L740 693.9ZM740 715.5 L741 715.5 L741 713.3 L742 713.3 L742 710.3 L743 710.3 L743 707.9 L744 707.9 L744 709.6 L745 709.6 L745 706.3 L746 706.3 L746 706.7 L747 706.7 L747 711.9 L748 711.9 L748 708.8 L749 708.8 L749 711.6 L750 711.6 L750 717.9 L751 717.9 L751 711.6 L752 711.6 L752 707.2 L753 707.2 L753 708.1 L754 708.1 L754 707.2 L755 707.2 L755 707.2 L756 707.2 L756 715.1 L757 715.1 L757 712.3 L758 712.3 L758 710.0 L759 710.0 L759 709.3 L760 709.3 L760 711.3 L761 711.3 L761 711.5 L762 711.5 L762 711.3 L763 711.3 L763 713.9 L764 713.9 L764 708.7 L765 708.7 L765 714.0 L766 714.0 L766 715.8 L767 715.8 L767 707.1 L768 707.1 L768 719.8 L769 719.8 L769 706.9 L770 706.9 L770 707.4 L771 707.4 L771 706.0 L772 706.0 L772 706.2 L773 706.2 L773 706.0 L774 706.0 L774 706.0 L775 706.0 L775 706.1 L776 706.1 L776 706.4 L777 706.4 L777 707.6 L778 707.6 L778 706.8 L779 706.8 L779 707.8 L780 707.8 L780 706.5 L781 706.5 L781 706.0 L782 706.0 L782 708.9 L783 708.9 L783 706.5 L784 706.5 L784 709.4 L785 709.4 L785 708.6 L786 708.6 L786 710.7 L787 710.7 L787 709.6 L788 709.6 L788 709.8 L789 709.8 L789 709.4 L790 709.4 L790 717.9 L791 717.9 L791 709.2 L792 709.2 L792 708.3 L793 708.3 L793 716.1 L794 716.1 L794 711.4 L795 711.4 L795 711.8 L796 711.8 L796 709.8 L797 709.8 L797 708.9 L798 708.9 L798 717.6 L799 717.6 L799 708.9 L800 708.9 L800 711.9 L801 711.9 L801 712.3 L802 712.3 L802 714.2 L803 714.2 L803 720.4 L804 720.4 L804 716.7 L805 716.7 L805 709.2 L806 709.2 L806 709.3 L807 709.3 L807 708.2 L808 708.2 L808 709.4 L809 709.4 L809 706.2 L810 706.2 L810 706.1 L811 706.1 L811 708.6 L812 708.6 L812 706.8 L813 706.8 L813 706.2 L814 706.2 L814 706.3 L815 706.3 L815 706.2 L816 706.2 L816 708.7 L817 708.7 L817 707.0 L818 707.0 L818 706.0 L819 706.0 L819 706.0 L820 706.0 L820 706.2 L821 706.2 L821 706.9 L822 706.9 L822 708.9 L823 708.9 L823 707.4 L824 707.4 L824 708.2 L825 708.2 L825 715.9 L826 715.9 L826 710.5 L827 710.5 L827 708.3 L828 708.3 L828 709.5 L829 709.5 L829 708.6 L830 708.6 L830 708.5 L831 708.5 L831 716.2 L832 716.2 L832 711.2 L833 711.2 L833 707.2 L834 707.2 L834 707.4 L835 707.4 L835 707.8 L836 707.8 L836 707.7 L837 707.7 L837 707.9 L838 707.9 L838 708.2 L839 708.2 L839 710.8 L840 710.8 L840 708.7 L841 708.7 L841 748.5 L840 748.5 L840 748.6 L839 748.6 L839 749.1 L838 749.1 L838 749.5 L837 749.5 L837 749.7 L836 749.7 L836 748.4 L835 748.4 L835 750.1 L834 750.1 L834 750.4 L833 750.4 L833 750.7 L832 750.7 L832 750.8 L831 750.8 L831 749.7 L830 749.7 L830 750.3 L829 750.3 L829 750.5 L828 750.5 L828 750.2 L827 750.2 L827 750.6 L826 750.6 L826 751.0 L825 751.0 L825 751.0 L824 751.0 L824 751.0 L823 751.0 L823 750.4 L822 750.4 L822 750.9 L821 750.9 L821 751.0 L820 751.0 L820 750.9 L819 750.9 L819 750.7 L818 750.7 L818 750.9 L817 750.9 L817 750.9 L816 750.9 L816 751.0 L815 751.0 L815 750.8 L814 750.8 L814 751.0 L813 751.0 L813 749.2 L812 749.2 L812 751.0 L811 751.0 L811 749.5 L810 749.5 L810 751.0 L809 751.0 L809 750.4 L808 750.4 L808 749.4 L807 749.4 L807 742.5 L806 742.5 L806 748.4 L805 748.4 L805 746.0 L804 746.0 L804 748.9 L803 748.9 L803 745.6 L802 745.6 L802 748.5 L801 748.5 L801 746.0 L800 746.0 L800 748.1 L799 748.1 L799 747.8 L798 747.8 L798 743.2 L797 743.2 L797 744.4 L796 744.4 L796 745.5 L795 745.5 L795 743.1 L794 743.1 L794 749.4 L793 749.4 L793 744.0 L792 744.0 L792 743.5 L791 743.5 L791 746.9 L790 746.9 L790 749.9 L789 749.9 L789 746.8 L788 746.8 L788 746.6 L787 746.6 L787 741.7 L786 741.7 L786 747.9 L785 747.9 L785 750.2 L784 750.2 L784 751.0 L783 751.0 L783 750.7 L782 750.7 L782 751.0 L781 751.0 L781 751.0 L780 751.0 L780 750.8 L779 750.8 L779 750.9 L778 750.9 L778 751.0 L777 751.0 L777 751.0 L776 751.0 L776 751.0 L775 751.0 L775 750.8 L774 750.8 L774 750.9 L773 750.9 L773 750.9 L772 750.9 L772 750.0 L771 750.0 L771 750.9 L770 750.9 L770 751.0 L769 751.0 L769 750.9 L768 750.9 L768 750.8 L767 750.8 L767 750.9 L766 750.9 L766 750.9 L765 750.9 L765 750.8 L764 750.8 L764 750.2 L763 750.2 L763 747.8 L762 747.8 L762 749.7 L761 749.7 L761 750.9 L760 750.9 L760 748.4 L759 748.4 L759 746.9 L758 746.9 L758 750.5 L757 750.5 L757 750.9 L756 750.9 L756 751.0 L755 751.0 L755 748.2 L754 748.2 L754 751.0 L753 751.0 L753 750.0 L752 750.0 L752 751.0 L751 751.0 L751 749.9 L750 749.9 L750 748.1 L749 748.1 L749 750.7 L748 750.7 L748 750.8 L747 750.8 L747 750.5 L746 750.5 L746 750.3 L745 750.3 L745 748.9 L744 748.9 L744 750.1 L743 750.1 L743 749.0 L742 749.0 L742 744.4 L741 744.4 L741 746.7 L740 746.7Z"/>
<rect x="740.8" y="658.5" width="98.5" height="93" rx="3.5" fill="none" stroke="#8db6f6" stroke-width="1.1"/>
<rect x="841.8" y="658" width="124" height="94" rx="3" fill="#b9d3fa"/>
<path clip-path="url(#cp8)" fill="#3b76d7" d="M841 659.1 L842 659.1 L842 659.4 L843 659.4 L843 659.4 L844 659.4 L844 659.2 L845 659.2 L845 659.8 L846 659.8 L846 659.3 L847 659.3 L847 659.1 L848 659.1 L848 659.1 L849 659.1 L849 659.2 L850 659.2 L850 659.2 L851 659.2 L851 659.2 L852 659.2 L852 659.1 L853 659.1 L853 659.2 L854 659.2 L854 659.1 L855 659.1 L855 659.2 L856 659.2 L856 659.2 L857 659.2 L857 659.1 L858 659.1 L858 659.0 L859 659.0 L859 659.4 L860 659.4 L860 659.2 L861 659.2 L861 659.2 L862 659.2 L862 659.2 L863 659.2 L863 659.3 L864 659.3 L864 659.9 L865 659.9 L865 660.0 L866 660.0 L866 659.8 L867 659.8 L867 659.3 L868 659.3 L868 662.3 L869 662.3 L869 659.5 L870 659.5 L870 659.8 L871 659.8 L871 662.8 L872 662.8 L872 661.4 L873 661.4 L873 664.2 L874 664.2 L874 665.7 L875 665.7 L875 663.9 L876 663.9 L876 663.6 L877 663.6 L877 663.5 L878 663.5 L878 659.1 L879 659.1 L879 659.7 L880 659.7 L880 664.6 L881 664.6 L881 663.4 L882 663.4 L882 661.4 L883 661.4 L883 663.3 L884 663.3 L884 664.3 L885 664.3 L885 660.9 L886 660.9 L886 663.0 L887 663.0 L887 662.9 L888 662.9 L888 661.2 L889 661.2 L889 659.6 L890 659.6 L890 661.5 L891 661.5 L891 661.9 L892 661.9 L892 660.1 L893 660.1 L893 661.4 L894 661.4 L894 659.5 L895 659.5 L895 659.3 L896 659.3 L896 659.1 L897 659.1 L897 659.1 L898 659.1 L898 660.6 L899 660.6 L899 659.1 L900 659.1 L900 659.2 L901 659.2 L901 659.2 L902 659.2 L902 660.6 L903 660.6 L903 659.0 L904 659.0 L904 659.6 L905 659.6 L905 664.0 L906 664.0 L906 672.5 L907 672.5 L907 672.5 L908 672.5 L908 672.9 L909 672.9 L909 672.5 L910 672.5 L910 665.4 L911 665.4 L911 672.5 L912 672.5 L912 672.5 L913 672.5 L913 668.2 L914 668.2 L914 660.6 L915 660.6 L915 670.7 L916 670.7 L916 671.8 L917 671.8 L917 663.4 L918 663.4 L918 671.5 L919 671.5 L919 670.2 L920 670.2 L920 671.5 L921 671.5 L921 671.9 L922 671.9 L922 671.2 L923 671.2 L923 660.4 L924 660.4 L924 660.7 L925 660.7 L925 660.1 L926 660.1 L926 659.1 L927 659.1 L927 659.1 L928 659.1 L928 659.1 L929 659.1 L929 659.2 L930 659.2 L930 659.3 L931 659.3 L931 659.3 L932 659.3 L932 660.5 L933 660.5 L933 659.6 L934 659.6 L934 660.0 L935 660.0 L935 659.3 L936 659.3 L936 659.3 L937 659.3 L937 659.0 L938 659.0 L938 659.1 L939 659.1 L939 659.1 L940 659.1 L940 659.6 L941 659.6 L941 659.3 L942 659.3 L942 659.3 L943 659.3 L943 659.2 L944 659.2 L944 659.5 L945 659.5 L945 659.0 L946 659.0 L946 660.0 L947 660.0 L947 659.2 L948 659.2 L948 659.4 L949 659.4 L949 659.1 L950 659.1 L950 662.1 L951 662.1 L951 666.8 L952 666.8 L952 668.5 L953 668.5 L953 671.5 L954 671.5 L954 672.0 L955 672.0 L955 671.8 L956 671.8 L956 662.5 L957 662.5 L957 670.1 L958 670.1 L958 663.3 L959 663.3 L959 669.0 L960 669.0 L960 672.2 L961 672.2 L961 671.2 L962 671.2 L962 672.5 L963 672.5 L963 671.7 L964 671.7 L964 672.5 L965 672.5 L965 673.4 L966 673.4 L966 673.7 L967 673.7 L967 688.2 L966 688.2 L966 687.7 L965 687.7 L965 689.2 L964 689.2 L964 689.8 L963 689.8 L963 690.9 L962 690.9 L962 691.4 L961 691.4 L961 691.1 L960 691.1 L960 690.8 L959 690.8 L959 692.9 L958 692.9 L958 693.5 L957 693.5 L957 691.0 L956 691.0 L956 693.4 L955 693.4 L955 690.0 L954 690.0 L954 693.3 L953 693.3 L953 692.5 L952 692.5 L952 694.2 L951 694.2 L951 700.2 L950 700.2 L950 703.7 L949 703.7 L949 703.1 L948 703.1 L948 703.3 L947 703.3 L947 703.9 L946 703.9 L946 703.7 L945 703.7 L945 704.0 L944 704.0 L944 703.1 L943 703.1 L943 702.6 L942 702.6 L942 703.9 L941 703.9 L941 702.8 L940 702.8 L940 703.7 L939 703.7 L939 703.1 L938 703.1 L938 703.0 L937 703.0 L937 703.7 L936 703.7 L936 703.8 L935 703.8 L935 704.0 L934 704.0 L934 704.0 L933 704.0 L933 701.4 L932 701.4 L932 703.3 L931 703.3 L931 703.2 L930 703.2 L930 700.5 L929 700.5 L929 703.0 L928 703.0 L928 703.5 L927 703.5 L927 703.9 L926 703.9 L926 703.0 L925 703.0 L925 701.0 L924 701.0 L924 702.3 L923 702.3 L923 690.5 L922 690.5 L922 689.1 L921 689.1 L921 689.2 L920 689.2 L920 688.8 L919 688.8 L919 689.2 L918 689.2 L918 689.3 L917 689.3 L917 689.1 L916 689.1 L916 690.2 L915 690.2 L915 701.9 L914 701.9 L914 694.0 L913 694.0 L913 689.3 L912 689.3 L912 689.2 L911 689.2 L911 688.7 L910 688.7 L910 688.8 L909 688.8 L909 689.4 L908 689.4 L908 689.3 L907 689.3 L907 689.3 L906 689.3 L906 697.4 L905 697.4 L905 701.7 L904 701.7 L904 703.7 L903 703.7 L903 701.1 L902 701.1 L902 701.8 L901 701.8 L901 702.8 L900 702.8 L900 703.0 L899 703.0 L899 702.3 L898 702.3 L898 703.7 L897 703.7 L897 703.5 L896 703.5 L896 703.7 L895 703.7 L895 704.0 L894 704.0 L894 699.7 L893 699.7 L893 702.7 L892 702.7 L892 701.8 L891 701.8 L891 698.9 L890 698.9 L890 701.7 L889 701.7 L889 690.2 L888 690.2 L888 701.4 L887 701.4 L887 692.2 L886 692.2 L886 700.6 L885 700.6 L885 699.1 L884 699.1 L884 697.2 L883 697.2 L883 701.6 L882 701.6 L882 689.0 L881 689.0 L881 701.0 L880 701.0 L880 701.2 L879 701.2 L879 701.4 L878 701.4 L878 691.6 L877 691.6 L877 701.3 L876 701.3 L876 701.5 L875 701.5 L875 689.6 L874 689.6 L874 701.3 L873 701.3 L873 700.1 L872 700.1 L872 695.8 L871 695.8 L871 699.9 L870 699.9 L870 696.8 L869 696.8 L869 703.3 L868 703.3 L868 703.9 L867 703.9 L867 703.4 L866 703.4 L866 701.4 L865 701.4 L865 703.6 L864 703.6 L864 701.7 L863 701.7 L863 701.2 L862 701.2 L862 704.0 L861 704.0 L861 703.7 L860 703.7 L860 701.5 L859 701.5 L859 703.5 L858 703.5 L858 704.0 L857 704.0 L857 703.9 L856 703.9 L856 703.9 L855 703.9 L855 702.1 L854 702.1 L854 701.7 L853 701.7 L853 703.7 L852 703.7 L852 704.0 L851 704.0 L851 703.9 L850 703.9 L850 704.0 L849 704.0 L849 704.0 L848 704.0 L848 704.0 L847 704.0 L847 700.9 L846 700.9 L846 701.3 L845 701.3 L845 704.0 L844 704.0 L844 702.4 L843 702.4 L843 703.9 L842 703.9 L842 703.6 L841 703.6ZM841 706.1 L842 706.1 L842 706.6 L843 706.6 L843 706.7 L844 706.7 L844 706.4 L845 706.4 L845 706.6 L846 706.6 L846 706.8 L847 706.8 L847 707.0 L848 707.0 L848 706.9 L849 706.9 L849 706.9 L850 706.9 L850 706.6 L851 706.6 L851 706.7 L852 706.7 L852 706.0 L853 706.0 L853 707.8 L854 707.8 L854 706.0 L855 706.0 L855 706.5 L856 706.5 L856 707.7 L857 707.7 L857 707.1 L858 707.1 L858 706.5 L859 706.5 L859 706.7 L860 706.7 L860 708.0 L861 708.0 L861 706.5 L862 706.5 L862 706.5 L863 706.5 L863 706.3 L864 706.3 L864 706.4 L865 706.4 L865 706.2 L866 706.2 L866 707.4 L867 707.4 L867 706.0 L868 706.0 L868 710.9 L869 710.9 L869 707.6 L870 707.6 L870 708.8 L871 708.8 L871 709.9 L872 709.9 L872 709.4 L873 709.4 L873 716.0 L874 716.0 L874 720.2 L875 720.2 L875 720.5 L876 720.5 L876 708.8 L877 708.8 L877 709.1 L878 709.1 L878 709.0 L879 709.0 L879 719.1 L880 719.1 L880 710.9 L881 710.9 L881 709.2 L882 709.2 L882 709.5 L883 709.5 L883 708.3 L884 708.3 L884 709.0 L885 709.0 L885 711.0 L886 711.0 L886 712.4 L887 712.4 L887 708.6 L888 708.6 L888 721.7 L889 721.7 L889 709.4 L890 709.4 L890 710.3 L891 710.3 L891 710.8 L892 710.8 L892 709.4 L893 709.4 L893 707.6 L894 707.6 L894 707.7 L895 707.7 L895 707.5 L896 707.5 L896 707.0 L897 707.0 L897 706.8 L898 706.8 L898 709.9 L899 709.9 L899 706.3 L900 706.3 L900 707.1 L901 707.1 L901 706.3 L902 706.3 L902 706.0 L903 706.0 L903 709.1 L904 709.1 L904 706.2 L905 706.2 L905 711.5 L906 711.5 L906 720.6 L907 720.6 L907 720.6 L908 720.6 L908 720.7 L909 720.7 L909 720.6 L910 720.6 L910 720.7 L911 720.7 L911 720.7 L912 720.7 L912 720.6 L913 720.6 L913 715.9 L914 715.9 L914 708.8 L915 708.8 L915 719.7 L916 719.7 L916 720.6 L917 720.6 L917 720.6 L918 720.6 L918 720.7 L919 720.7 L919 720.8 L920 720.8 L920 720.7 L921 720.7 L921 720.6 L922 720.6 L922 719.5 L923 719.5 L923 707.7 L924 707.7 L924 707.7 L925 707.7 L925 706.7 L926 706.7 L926 706.7 L927 706.7 L927 706.7 L928 706.7 L928 707.1 L929 707.1 L929 706.5 L930 706.5 L930 706.2 L931 706.2 L931 706.1 L932 706.1 L932 706.2 L933 706.2 L933 707.0 L934 707.0 L934 706.9 L935 706.9 L935 706.9 L936 706.9 L936 707.0 L937 707.0 L937 707.1 L938 707.1 L938 706.6 L939 706.6 L939 708.0 L940 708.0 L940 706.2 L941 706.2 L941 706.9 L942 706.9 L942 706.7 L943 706.7 L943 706.1 L944 706.1 L944 709.2 L945 709.2 L945 707.1 L946 707.1 L946 708.2 L947 708.2 L947 707.1 L948 707.1 L948 706.1 L949 706.1 L949 707.6 L950 707.6 L950 709.4 L951 709.4 L951 717.3 L952 717.3 L952 717.7 L953 717.7 L953 716.2 L954 716.2 L954 716.2 L955 716.2 L955 716.2 L956 716.2 L956 716.2 L957 716.2 L957 716.6 L958 716.6 L958 718.9 L959 718.9 L959 718.2 L960 718.2 L960 717.3 L961 717.3 L961 720.2 L962 720.2 L962 720.4 L963 720.4 L963 719.8 L964 719.8 L964 721.1 L965 721.1 L965 721.7 L966 721.7 L966 721.8 L967 721.8 L967 736.3 L966 736.3 L966 735.7 L965 735.7 L965 736.8 L964 736.8 L964 737.8 L963 737.8 L963 737.6 L962 737.6 L962 745.9 L961 745.9 L961 738.5 L960 738.5 L960 741.5 L959 741.5 L959 744.9 L958 744.9 L958 740.4 L957 740.4 L957 740.6 L956 740.6 L956 744.1 L955 744.1 L955 739.8 L954 739.8 L954 738.3 L953 738.3 L953 741.6 L952 741.6 L952 746.6 L951 746.6 L951 747.0 L950 747.0 L950 749.2 L949 749.2 L949 750.9 L948 750.9 L948 749.4 L947 749.4 L947 750.9 L946 750.9 L946 751.0 L945 751.0 L945 750.9 L944 750.9 L944 750.2 L943 750.2 L943 750.9 L942 750.9 L942 750.5 L941 750.5 L941 750.7 L940 750.7 L940 750.9 L939 750.9 L939 751.0 L938 751.0 L938 750.4 L937 750.4 L937 749.7 L936 749.7 L936 749.9 L935 749.9 L935 750.6 L934 750.6 L934 750.8 L933 750.8 L933 749.3 L932 749.3 L932 750.4 L931 750.4 L931 749.7 L930 749.7 L930 751.0 L929 751.0 L929 751.0 L928 751.0 L928 750.4 L927 750.4 L927 750.0 L926 750.0 L926 749.9 L925 749.9 L925 750.9 L924 750.9 L924 749.6 L923 749.6 L923 739.5 L922 739.5 L922 738.4 L921 738.4 L921 743.0 L920 743.0 L920 738.6 L919 738.6 L919 738.4 L918 738.4 L918 740.4 L917 740.4 L917 738.1 L916 738.1 L916 739.4 L915 739.4 L915 749.4 L914 749.4 L914 741.5 L913 741.5 L913 737.1 L912 737.1 L912 737.3 L911 737.3 L911 737.3 L910 737.3 L910 737.3 L909 737.3 L909 741.2 L908 741.2 L908 736.9 L907 736.9 L907 736.9 L906 736.9 L906 745.4 L905 745.4 L905 750.9 L904 750.9 L904 751.0 L903 751.0 L903 751.0 L902 751.0 L902 751.0 L901 751.0 L901 749.6 L900 749.6 L900 750.9 L899 750.9 L899 749.2 L898 749.2 L898 750.6 L897 750.6 L897 750.1 L896 750.1 L896 751.0 L895 751.0 L895 750.9 L894 750.9 L894 750.3 L893 750.3 L893 747.9 L892 747.9 L892 748.2 L891 748.2 L891 749.5 L890 749.5 L890 745.1 L889 745.1 L889 750.0 L888 750.0 L888 748.4 L887 748.4 L887 750.0 L886 750.0 L886 750.1 L885 750.1 L885 745.1 L884 745.1 L884 746.0 L883 746.0 L883 748.5 L882 748.5 L882 745.2 L881 745.2 L881 747.1 L880 747.1 L880 749.3 L879 749.3 L879 750.8 L878 750.8 L878 750.8 L877 750.8 L877 750.4 L876 750.4 L876 748.2 L875 748.2 L875 748.8 L874 748.8 L874 748.9 L873 748.9 L873 747.2 L872 747.2 L872 750.4 L871 750.4 L871 749.8 L870 749.8 L870 750.9 L869 750.9 L869 750.4 L868 750.4 L868 751.0 L867 751.0 L867 750.4 L866 750.4 L866 750.8 L865 750.8 L865 750.5 L864 750.5 L864 750.2 L863 750.2 L863 750.2 L862 750.2 L862 751.0 L861 751.0 L861 751.0 L860 751.0 L860 751.0 L859 751.0 L859 751.0 L858 751.0 L858 750.9 L857 750.9 L857 750.9 L856 750.9 L856 750.9 L855 750.9 L855 749.3 L854 749.3 L854 750.2 L853 750.2 L853 750.0 L852 750.0 L852 750.1 L851 750.1 L851 750.8 L850 750.8 L850 749.7 L849 749.7 L849 751.0 L848 751.0 L848 750.9 L847 750.9 L847 750.5 L846 750.5 L846 750.9 L845 750.9 L845 750.7 L844 750.7 L844 750.9 L843 750.9 L843 749.5 L842 749.5 L842 750.9 L841 750.9Z"/>
<rect x="842.3" y="658.5" width="123" height="93" rx="3.5" fill="none" stroke="#8db6f6" stroke-width="1.1"/>
</svg>
<div class="tab" style="left:0px">1</div>
<div class="tab" style="left:85px">2</div>
<div class="tab" style="left:193px">3</div>
<div class="tab" style="left:263px">4</div>
<div class="tab" style="left:371px">5</div>
<div class="tab" style="left:497px">6</div>
<div class="tab" style="left:583px">7</div>
<div class="tab" style="left:740px">8</div>
<div class="tab" style="left:841px">9</div><!--/WAVE-->
 <div class="abs" style="left:196px;top:618px;width:1px;height:134px;background:#e0151a"></div>
 <div class="abs" style="left:11px;top:635px;font-size:12.8px;color:#c0161a">10:32</div>
 <div class="abs" style="right:12px;top:635px;font-size:12.8px;color:#444">51:56:67</div>
 <div class="abs" style="left:15px;top:775px;font-size:12.8px;color:#555">TRIAL version</div>

</div>
</body></html>
